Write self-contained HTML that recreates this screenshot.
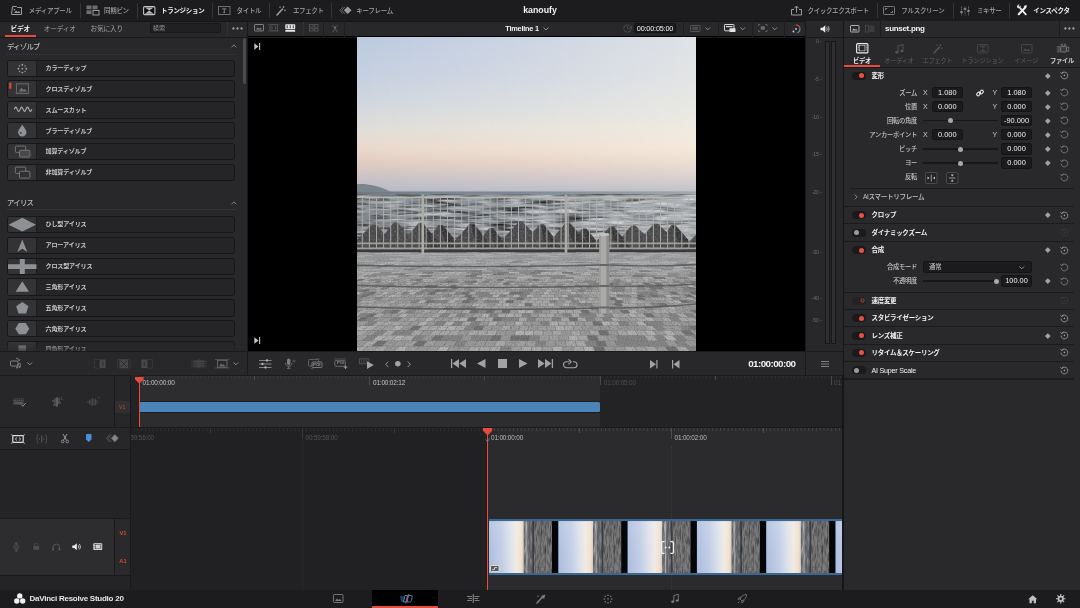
<!DOCTYPE html>
<html lang="ja"><head><meta charset="utf-8"><title>DaVinci Resolve - kanoufy</title>
<style>
*{box-sizing:border-box;margin:0;padding:0}
html,body{width:1080px;height:608px;overflow:hidden;background:#28282a}
body{position:relative;font-family:"Liberation Sans","Noto Sans CJK JP",sans-serif;color:#a4a4a6;font-size:6.6px;line-height:10px;-webkit-font-smoothing:antialiased}
#app{position:absolute;left:0;top:0;width:1080px;height:608px;overflow:hidden;will-change:transform}
.a{position:absolute}
.t{position:absolute;white-space:nowrap;line-height:10px;height:10px}
.r{text-align:right}
.w{color:#f2f2f2}
.b{font-weight:bold}
.m{font-weight:500}
.sep{position:absolute;width:0;border-left:1px dotted #3a3a3c}
.vs{position:absolute;width:1px;background:#19191b}
.hs{position:absolute;height:1px;background:#19191b}
svg{position:absolute;overflow:visible}
.item{position:absolute;left:7px;width:227.5px;height:17.4px;background:#252527;border:1px solid #171719;border-radius:2.5px;overflow:hidden}
.item i{position:absolute;left:0;top:0;width:28.5px;height:100%;background:#333335;border-right:1px solid #1c1c1e}
.item span{position:absolute;left:37.5px;top:2.6px;line-height:10px;color:#c8c8ca;font-weight:bold;font-size:6.1px;letter-spacing:-.2px;white-space:nowrap}
.fld{position:absolute;height:11.4px;background:#1b1b1d;border:1px solid #141416;border-radius:2px;color:#ededed;font-size:7.4px;line-height:9.6px;text-align:center}
.sl{position:absolute;height:1.2px;background:#171719}
.kn{position:absolute;width:5px;height:5px;border-radius:50%;background:#a8a8aa}
.tg{position:absolute;width:13.5px;height:8px;border-radius:4px;background:#1a1a1c}
.tg b{position:absolute;top:1.5px;width:5px;height:5px;border-radius:50%}
.tg.on b{right:1.6px;background:#e8503f}
.tg.off b{left:1.6px;background:#9a9a9c}
.dm{position:absolute;width:3.6px;height:3.6px;background:#a2a2a4;transform:rotate(45deg)}
.il{position:absolute;left:844px;width:229.5px;height:1.3px;background:#1b1b1d}
</style></head>
<body>
<div id="app">
<div class="a" style="left:0px;top:0px;width:1080px;height:20.5px;background:#1c1c1e;"></div>
<div class="a" style="left:0px;top:20.5px;width:1080px;height:0.8px;background:#151517;"></div>
<div class="a" style="left:247.5px;top:37px;width:558px;height:314px;background:#000;"></div>
<div class="a" style="left:0px;top:375px;width:843.5px;height:215px;background:#272729;"></div>
<div class="a" style="left:130.5px;top:375px;width:469.5px;height:52px;background:#2d2d2f;"></div>
<div class="a" style="left:600px;top:375px;width:243.5px;height:52px;background:#232325;"></div>
<div class="a" style="left:0px;top:427px;width:843.5px;height:163px;background:#272729;"></div>
<div class="a" style="left:131px;top:427px;width:356.5px;height:163px;background:#212123;"></div>
<div class="a" style="left:487.5px;top:427px;width:356px;height:163px;background:#2b2b2d;"></div>
<div class="a" style="left:0px;top:449.5px;width:130.5px;height:140.5px;background:#242426;"></div>
<div class="a" style="left:0px;top:518.5px;width:113.5px;height:56.5px;background:#2d2d2f;"></div>
<div class="a" style="left:114px;top:518.5px;width:16.5px;height:56.5px;background:#2a2a2c;"></div>
<div class="a" style="left:0px;top:590px;width:1080px;height:18px;background:#1c1c1e;"></div>
<div class="a" style="left:372px;top:590px;width:66.3px;height:18px;background:#000;"></div>
<div class="a" style="left:372px;top:606px;width:66.3px;height:2px;background:#e64b3d;"></div>
<div class="a" style="left:844px;top:21.3px;width:236px;height:568.7px;background:#29292b;"></div>
<div class="a" style="left:805.5px;top:21.3px;width:38px;height:329.7px;background:#28282a;"></div>
<div class="hs" style="left:0;top:36.8px;width:1080px;background:#1a1a1c"></div>
<div class="hs" style="left:0;top:350.6px;width:843.5px;background:#1a1a1c"></div>
<div class="hs" style="left:0;top:374.6px;width:843.5px;background:#1a1a1c"></div>
<div class="hs" style="left:0;top:426.6px;width:843.5px;background:#1a1a1c"></div>
<div class="hs" style="left:0;top:449px;width:130.5px;background:#19191b"></div>
<div class="hs" style="left:0;top:518px;width:130.5px;background:#19191b"></div>
<div class="hs" style="left:0;top:574.8px;width:130.5px;background:#19191b"></div>
<div class="vs" style="left:246.8px;top:21px;height:354px"></div>
<div class="vs" style="left:805.2px;top:21px;height:354px"></div>
<div class="vs" style="left:843px;top:21px;height:569px;width:1.2px;background:#161618"></div>
<div class="vs" style="left:113.5px;top:375px;height:52px"></div>
<div class="vs" style="left:130px;top:375px;height:215px"></div>
<div class="vs" style="left:113.5px;top:518.5px;height:56.5px"></div>
<div class="a" style="left:247.8px;top:36.3px;width:557.4px;height:1px;background:#000;"></div>
<div class="a" style="left:79.5px;top:3px;height:15px;width:1px;background:#363638"></div>
<div class="a" style="left:136.5px;top:3px;height:15px;width:1px;background:#363638"></div>
<div class="a" style="left:211.5px;top:3px;height:15px;width:1px;background:#363638"></div>
<div class="a" style="left:268.5px;top:3px;height:15px;width:1px;background:#363638"></div>
<div class="a" style="left:331.2px;top:3px;height:15px;width:1px;background:#363638"></div>
<div class="a" style="left:877px;top:3px;height:15px;width:1px;background:#363638"></div>
<div class="a" style="left:952.5px;top:3px;height:15px;width:1px;background:#363638"></div>
<div class="a" style="left:1008.7px;top:3px;height:15px;width:1px;background:#363638"></div>
<span class="t m" style="left:28.8px;top:5.9px;font-size:6.5px;color:#a4a4a6;letter-spacing:-.3px">メディアプール</span>
<span class="t m" style="left:104px;top:5.9px;font-size:6.5px;color:#a4a4a6;letter-spacing:-.3px">同期ビン</span>
<span class="t w b" style="left:161px;top:5.9px;font-size:6.5px;letter-spacing:-.3px">トランジション</span>
<span class="t m" style="left:236.5px;top:5.9px;font-size:6.5px;color:#a4a4a6;letter-spacing:-.3px">タイトル</span>
<span class="t m" style="left:293px;top:5.9px;font-size:6.5px;color:#a4a4a6;letter-spacing:-.4px">エフェクト</span>
<span class="t m" style="left:356.3px;top:5.9px;font-size:6.5px;color:#a4a4a6;letter-spacing:-.3px">キーフレーム</span>
<span class="t w b" style="left:500px;width:80px;text-align:center;top:5.2px;font-size:8.8px;">kanoufy</span>
<span class="t m" style="left:807.5px;top:5.9px;font-size:6.5px;color:#a4a4a6;letter-spacing:-.35px">クイックエクスポート</span>
<span class="t m" style="left:901.3px;top:5.9px;font-size:6.5px;color:#a4a4a6;letter-spacing:-.3px">フルスクリーン</span>
<span class="t m" style="left:977px;top:5.9px;font-size:6.5px;color:#a4a4a6;letter-spacing:-.4px">ミキサー</span>
<span class="t w b" style="left:1033.3px;top:5.9px;font-size:6.5px;letter-spacing:-.3px">インスペクタ</span>
<svg style="left:10.3px;top:4.8px;" width="12.5" height="10" viewBox="0 0 12.5 10"><path d="M2.5 1.5h4l1 1h4v7h-10z" fill="none" stroke="#9c9c9e" stroke-width="1"/><path d="M4 8l2-2.5 1.5 1.5 1.5-1 1.5 2z" fill="#9c9c9e"/><circle cx="4.5" cy="4.7" r=".8" fill="#9c9c9e"/></svg>
<svg style="left:86px;top:5px;" width="13.5" height="10.5" viewBox="0 0 13.5 10.5"><rect x=".5" y=".5" width="5" height="3.8" fill="#6e6e70"/><rect x="6.5" y=".5" width="5" height="3.8" fill="#6e6e70"/><rect x=".5" y="5.3" width="5" height="3.8" fill="#6e6e70"/><rect x="7" y="5.5" width="6" height="4.5" fill="#1c1c1e" stroke="#9c9c9e"/></svg>
<svg style="left:143px;top:6px;" width="12.5" height="9.2" viewBox="0 0 12.5 9.2"><rect x=".6" y=".6" width="11.3" height="8" rx="1" fill="#0c0c0c" stroke="#c2c2c2" stroke-width="1.1"/><path d="M1.8 1.5h8.9L6.25 4.6zM1.8 7.7h8.9L6.25 4.6z" fill="#b4b4b4"/></svg>
<svg style="left:218px;top:6px;" width="12.5" height="9" viewBox="0 0 12.5 9"><rect x=".5" y=".5" width="11.5" height="8" fill="none" stroke="#6c6c6e"/><path d="M4.2 2.9h4.1M6.25 2.9v3.8M5.4 6.7h1.7" stroke="#8c8c8e" stroke-width=".9"/></svg>
<svg style="left:275.5px;top:5px;" width="10" height="11" viewBox="0 0 10 11"><path d="M1 10l5.5-6" stroke="#9c9c9e" stroke-width="1.6" stroke-linecap="round"/><path d="M7.5 1v2M6.5 2h2M9 4.5v1.6M8.2 5.3h1.6M4 1.5v1.4M3.3 2.2h1.4" stroke="#9c9c9e" stroke-width=".7"/></svg>
<svg style="left:338.5px;top:6.2px;" width="13" height="8.6" viewBox="0 0 13 8.6"><path d="M4 .8L.8 4.3 4 7.8M6 .8L2.8 4.3 6 7.8" fill="none" stroke="#78787a" stroke-width=".8"/><path d="M8.7 .5l3.8 3.8-3.8 3.8-3.8-3.8z" fill="#9c9c9e"/></svg>
<svg style="left:790.5px;top:5px;" width="11" height="10.5" viewBox="0 0 11 10.5"><path d="M3 4.5h-2.5v5.5h10v-5.5h-2.5" fill="none" stroke="#9c9c9e"/><path d="M5.5 7.5v-6M3.3 3.3l2.2-2.3 2.2 2.3" fill="none" stroke="#9c9c9e"/></svg>
<svg style="left:883.2px;top:6px;" width="12" height="9" viewBox="0 0 12 9"><rect x=".5" y=".5" width="11" height="8" rx=".8" fill="none" stroke="#78787a"/><path d="M2.5 4v-1.5h1.8M9.5 5v1.5h-1.8" fill="none" stroke="#9c9c9e" stroke-width=".8"/></svg>
<svg style="left:960px;top:5.5px;" width="10" height="10" viewBox="0 0 10 10"><path d="M1.5 .5v9M5 .5v9M8.5 .5v9" stroke="#6e6e70" stroke-width=".9" stroke-dasharray="1.4 .6"/><path d="M.2 6h2.6M3.7 3h2.6M7.2 5h2.6" stroke="#9a9a9c" stroke-width="1.7"/></svg>
<svg style="left:1017px;top:5.3px;" width="10.5" height="10.5" viewBox="0 0 10.5 10.5"><path d="M1.7 9.3L8 2.8" stroke="#f0f0f0" stroke-width="2" stroke-linecap="round"/><path d="M8.8 9.3L3 3" stroke="#f0f0f0" stroke-width="1.8" stroke-linecap="round"/><path d="M.6 2.9a2 2 0 0 0 3-2.3l-1.3 1.2-.9-.9 1.2-1.3a2 2 0 0 0-2 3.3z" fill="#f0f0f0"/><path d="M7.6 .6l2.3-.4-.4 2.3-1.2.9-1.6-1.6z" fill="#f0f0f0"/></svg>
<span class="t w b" style="left:10.6px;top:23.5px;font-size:6.7px;letter-spacing:-.2px">ビデオ</span>
<div class="a" style="left:5px;top:35.4px;width:31px;height:1.6px;background:#e64b3d;"></div>
<span class="t " style="left:43.7px;top:23.5px;font-size:6.7px;color:#a4a4a6;letter-spacing:-.2px">オーディオ</span>
<span class="t " style="left:90.6px;top:23.5px;font-size:6.7px;color:#a4a4a6;letter-spacing:-.2px">お気に入り</span>
<div class="a" style="left:150.2px;top:23.3px;width:71.3px;height:10px;background:#202022;border:1px solid #18181a;border-radius:1.5px"></div>
<span class="t " style="left:152.8px;top:23.4px;font-size:6.2px;color:#8c8c8e;">検索</span>
<div class="sep" style="left:226.8px;top:22px;height:14px"></div>
<svg style="left:232px;top:27px;" width="11" height="3" viewBox="0 0 11 3"><circle cx="1.4" cy="1.5" r="1.15" fill="#a0a0a2"/><circle cx="5.5" cy="1.5" r="1.15" fill="#a0a0a2"/><circle cx="9.6" cy="1.5" r="1.15" fill="#a0a0a2"/></svg>
<svg style="left:253.5px;top:24.3px;" width="10" height="7.5" viewBox="0 0 10 7.5"><rect x=".5" y=".5" width="9" height="6.5" rx=".6" fill="none" stroke="#8a8a8c" stroke-width=".9"/><path d="M2 5.5l1.8-2 1.5 1.2 1.2-.8 1.5 1.6z" fill="#8a8a8c"/></svg>
<svg style="left:268px;top:24.3px;" width="11.5" height="7.5" viewBox="0 0 11.5 7.5"><rect x="2" y=".8" width="7.5" height="6" fill="none" stroke="#58585a" stroke-width=".9"/><path d="M0 .5h11.5M0 7h11.5" stroke="#58585a" stroke-width=".7" stroke-dasharray="1 .8"/><path d="M4 2.5v2.8M7.5 2.5v2.8" stroke="#58585a"/></svg>
<svg style="left:285px;top:24px;" width="10.5" height="8" viewBox="0 0 10.5 8"><rect x=".3" y=".3" width="9.9" height="5" rx=".7" fill="#e8e8e8"/><rect x=".3" y="6" width="9.9" height="1.8" rx=".5" fill="#e8e8e8"/><path d="M2.2 1.3v3M5.25 1.3v3M8.3 1.3v3" stroke="#28282a" stroke-width=".9"/></svg>
<div class="sep" style="left:303px;top:22px;height:14px"></div>
<svg style="left:309px;top:24.3px;" width="9.5" height="7.5" viewBox="0 0 9.5 7.5"><rect x=".4" y=".4" width="3.7" height="2.7" fill="none" stroke="#58585a" stroke-width=".8"/><rect x="5.3" y=".4" width="3.7" height="2.7" fill="none" stroke="#58585a" stroke-width=".8"/><rect x=".4" y="4.3" width="3.7" height="2.7" fill="none" stroke="#58585a" stroke-width=".8"/><rect x="5.3" y="4.3" width="3.7" height="2.7" fill="none" stroke="#58585a" stroke-width=".8"/></svg>
<div class="vs" style="left:323.3px;top:21px;height:16px;background:#1e1e20"></div>
<svg style="left:331.5px;top:24.5px;" width="6" height="7.5" viewBox="0 0 6 7.5"><circle cx="3" cy="2.6" r="1.3" fill="#6a6a6c"/><path d="M.8 7.3c.3-2 1.2-2.6 2.2-2.6s1.9.6 2.2 2.6" fill="none" stroke="#6a6a6c" stroke-width=".8"/><path d="M.5 1.5v-1h1M5.5 1.5v-1h-1" fill="none" stroke="#6a6a6c" stroke-width=".6"/></svg>
<div class="vs" style="left:344px;top:21px;height:16px;background:#1e1e20"></div>
<span class="t w b" style="left:505.3px;top:23.5px;font-size:7.4px;letter-spacing:-.25px">Timeline 1</span>
<svg style="left:542.5px;top:26.8px;" width="6" height="3.5" viewBox="0 0 6 3.5"><path d="M.5 .5l2.5 2.5 2.5-2.5" fill="none" stroke="#9a9a9c" stroke-width=".9"/></svg>
<svg style="left:622.5px;top:23.8px;" width="9" height="9" viewBox="0 0 9 9"><circle cx="4.5" cy="4.5" r="3.8" fill="none" stroke="#4c4c4e" stroke-width=".9"/><path d="M4.5 2v2.7h2.5" fill="none" stroke="#4c4c4e" stroke-width=".9"/><path d="M6 3.5l3-1v2z" fill="#4c4c4e"/></svg>
<div class="a" style="left:633.8px;top:23.3px;width:42.5px;height:10px;background:#19191b;border-radius:1.5px;border:1px solid #141416"></div>
<span class="t w" style="left:615px;width:80px;text-align:center;top:23.5px;font-size:7.3px;letter-spacing:-.2px">00:00:05:00</span>
<div class="vs" style="left:682.5px;top:21px;height:16px;background:#1e1e20"></div>
<div class="vs" style="left:718px;top:21px;height:16px;background:#1e1e20"></div>
<div class="vs" style="left:752px;top:21px;height:16px;background:#1e1e20"></div>
<div class="vs" style="left:783.7px;top:21px;height:16px;background:#1e1e20"></div>
<svg style="left:690px;top:24.8px;" width="10.5" height="7" viewBox="0 0 10.5 7"><rect x=".5" y=".5" width="9.5" height="6" rx=".6" fill="none" stroke="#58585a" stroke-width=".9"/><rect x="2.2" y="1.8" width="6" height="3.4" fill="#4a4a4c"/></svg>
<svg style="left:705.3px;top:27px;" width="5.5" height="3.5" viewBox="0 0 5.5 3.5"><path d="M.5 .5l2.25 2.3 2.25-2.3" fill="none" stroke="#9a9a9c" stroke-width=".9"/></svg>
<svg style="left:724px;top:24px;" width="12" height="8.5" viewBox="0 0 12 8.5"><rect x=".5" y=".5" width="9.5" height="6.3" rx=".6" fill="none" stroke="#d8d8d8" stroke-width="1"/><rect x="2" y="2" width="6.5" height="1.2" fill="#d8d8d8"/><rect x="5.5" y="4.3" width="6" height="3.8" rx=".5" fill="#e4e4e4"/></svg>
<svg style="left:739.5px;top:27px;" width="5.5" height="3.5" viewBox="0 0 5.5 3.5"><path d="M.5 .5l2.25 2.3 2.25-2.3" fill="none" stroke="#9a9a9c" stroke-width=".9"/></svg>
<svg style="left:758px;top:24.3px;" width="9.5" height="8" viewBox="0 0 9.5 8"><path d="M.5 2.2v-1.7h1.7M9 2.2v-1.7h-1.7M.5 5.8v1.7h1.7M9 5.8v1.7h-1.7" fill="none" stroke="#6a6a6c" stroke-width=".8"/><rect x="2.7" y="2.3" width="4.2" height="3.4" fill="#6a6a6c"/></svg>
<svg style="left:772px;top:27px;" width="5.5" height="3.5" viewBox="0 0 5.5 3.5"><path d="M.5 .5l2.25 2.3 2.25-2.3" fill="none" stroke="#9a9a9c" stroke-width=".9"/></svg>
<svg style="left:791px;top:23.5px;" width="10.5" height="10" viewBox="0 0 10.5 10"><circle cx="5" cy="5" r="4" fill="none" stroke="#3a3a3c" stroke-width="1.1"/><path d="M5 1a4 4 0 0 1 4 4" fill="none" stroke="#e8503f" stroke-width="1.2"/><path d="M9 5a4 4 0 0 1-2.5 3.7" fill="none" stroke="#4a90d9" stroke-width="1.2"/><circle cx="5" cy="5" r=".9" fill="#d0d0d0"/><circle cx="2.5" cy="7.5" r=".9" fill="#d0d0d0"/></svg>
<svg style="left:819.5px;top:24.8px;" width="10" height="8" viewBox="0 0 10 8"><path d="M.5 2.7h2l2.8-2.4v7.4l-2.8-2.4h-2z" fill="#ececec"/><path d="M6.6 2.3c.8.9.8 2.5 0 3.4M7.9 1.2c1.5 1.6 1.5 4 0 5.6" fill="none" stroke="#ececec" stroke-width=".8"/></svg>
<svg style="left:849.5px;top:24.5px;" width="9.5" height="7.5" viewBox="0 0 9.5 7.5"><rect x=".5" y=".5" width="8.5" height="6.5" rx=".6" fill="none" stroke="#bdbdbf" stroke-width=".9"/><path d="M2 5.5l1.7-2 1.4 1.2 1.1-.8 1.4 1.6z" fill="#bdbdbf"/></svg>
<svg style="left:865px;top:24.5px;" width="10" height="7.5" viewBox="0 0 10 7.5"><rect x=".5" y=".5" width="3" height="6.5" fill="none" stroke="#4a4a4c" stroke-width=".8"/><rect x="4.5" y=".5" width="5" height="6.5" fill="#3c3c3e"/></svg>
<div class="vs" style="left:880.3px;top:21px;height:16px;background:#1c1c1e"></div>
<div class="vs" style="left:1059.3px;top:21px;height:16px;background:#1c1c1e"></div>
<span class="t w b" style="left:885px;top:24px;font-size:8px;letter-spacing:-.3px">sunset.png</span>
<svg style="left:1064.3px;top:27px;" width="11" height="3" viewBox="0 0 11 3"><circle cx="1.4" cy="1.5" r="1.15" fill="#a6a6a8"/><circle cx="5.4" cy="1.5" r="1.15" fill="#a6a6a8"/><circle cx="9.4" cy="1.5" r="1.15" fill="#a6a6a8"/></svg>
<span class="t m" style="left:7px;top:41.6px;font-size:7.4px;color:#bababc;letter-spacing:-.75px">ディゾルブ</span>
<svg style="left:230.5px;top:44.4px;" width="6" height="4" viewBox="0 0 6 4"><path d="M.5 3.3l2.4-2.5 2.4 2.5" fill="none" stroke="#8a8a8c" stroke-width=".9"/></svg>
<div class="a" style="left:7px;top:53.6px;width:229px;height:0;border-top:1px dotted #3c3c3e"></div>
<span class="t m" style="left:7px;top:197.8px;font-size:7.4px;color:#bababc;letter-spacing:-.75px">アイリス</span>
<svg style="left:230.5px;top:200.60000000000002px;" width="6" height="4" viewBox="0 0 6 4"><path d="M.5 3.3l2.4-2.5 2.4 2.5" fill="none" stroke="#8a8a8c" stroke-width=".9"/></svg>
<div class="a" style="left:7px;top:209.4px;width:229px;height:0;border-top:1px solid #353537"></div>
<div class="item" style="top:59.5px"><i></i><span>カラーディップ</span><svg style="left:0;top:0" width="28.5" height="15.4" viewBox="0 0 28.5 15.4"><circle cx="18.2" cy="7.7" r="0.95" fill="#9a9aa0"/><circle cx="17.06" cy="10.46" r="0.7" fill="#9a9aa0"/><circle cx="14.3" cy="11.6" r="0.95" fill="#9a9aa0"/><circle cx="11.54" cy="10.46" r="0.7" fill="#9a9aa0"/><circle cx="10.4" cy="7.7" r="0.95" fill="#9a9aa0"/><circle cx="11.54" cy="4.94" r="0.7" fill="#9a9aa0"/><circle cx="14.3" cy="3.8" r="0.95" fill="#9a9aa0"/><circle cx="17.06" cy="4.94" r="0.7" fill="#9a9aa0"/><circle cx="14.3" cy="7.7" r=".9" fill="#9a9aa0"/></svg></div>
<div class="item" style="top:80.35px"><i></i><span>クロスディゾルブ</span><svg style="left:0;top:0" width="28.5" height="15.4" viewBox="0 0 28.5 15.4"><rect x="8.5" y="2.8" width="12" height="9.6" fill="none" stroke="#707072" stroke-width=".9"/><path d="M6.5 3.8h16M6.5 11.5h16" stroke="#4e4e50" stroke-width=".5"/><path d="M10.5 10.5l3-3.8 2.2 2.3 1.2-1.1 2 2.6z" fill="#707072"/><rect x="1.3" y="1.8" width="2" height="6" rx=".5" fill="#f0452f"/></svg></div>
<div class="item" style="top:101.2px"><i></i><span>スムースカット</span><svg style="left:0;top:0" width="28.5" height="15.4" viewBox="0 0 28.5 15.4"><path d="M6.3 7.3L6.8 6.2L7.3 5.5L7.8 5.2L8.3 5.5L8.7 6.2L9.2 7.3L9.7 8.3L10.2 9.1L10.7 9.4L11.2 9.1L11.7 8.3L12.2 7.3L12.7 6.3L13.1 5.5L13.6 5.2L14.1 5.5L14.6 6.2L15.1 7.3L15.6 8.3L16.1 9.1L16.6 9.4L17.1 9.1L17.5 8.3L18 7.3L18.5 6.3L19 5.5L19.5 5.2L20 5.5L20.5 6.2L21 7.3L21.5 8.3L21.9 9.1L22.4 9.4L22.9 9.1L23.4 8.3L23.9 7.3" fill="none" stroke="#b0b0b4" stroke-width="1.1"/></svg></div>
<div class="item" style="top:122.05px"><i></i><span>ブラーディゾルブ</span><svg style="left:0;top:0" width="28.5" height="15.4" viewBox="0 0 28.5 15.4"><path d="M14.3 1.8c1.8 3 4.2 5 4.2 7.5a4.2 4.2 0 0 1-8.4 0c0-2.5 2.4-4.5 4.2-7.5z" fill="#8e9297"/><circle cx="12.8" cy="9.9" r=".9" fill="#38383a"/></svg></div>
<div class="item" style="top:142.9px"><i></i><span>加算ディゾルブ</span><svg style="left:0;top:0" width="28.5" height="15.4" viewBox="0 0 28.5 15.4"><rect x="7.4" y="2.1" width="10.3" height="6.3" rx=".9" fill="#303032" stroke="#7c7c7e" stroke-width=".9"/><rect x="11.5" y="6.3" width="10.4" height="6.8" rx=".9" fill="#48484a" stroke="#7c7c7e" stroke-width=".9"/></svg></div>
<div class="item" style="top:163.75px"><i></i><span>非加算ディゾルブ</span><svg style="left:0;top:0" width="28.5" height="15.4" viewBox="0 0 28.5 15.4"><rect x="7.4" y="2.1" width="10.3" height="6.3" rx=".9" fill="#303032" stroke="#7c7c7e" stroke-width=".9"/><rect x="11.5" y="6.3" width="10.4" height="6.8" rx=".9" fill="#303032" stroke="#7c7c7e" stroke-width=".9"/></svg></div>
<div class="a" style="left:0;top:200px;width:243px;height:150.6px;overflow:hidden">
<div class="item" style="top:15.8px"><i></i><span>ひし型アイリス</span><svg style="left:0;top:0" width="28.5" height="15.4" viewBox="0 0 28.5 15.4"><path d="M.5 7.7L14.3 .8 28 7.7 14.3 14.6z" fill="#8d9194"/></svg></div>
<div class="item" style="top:36.65px"><i></i><span>アローアイリス</span><svg style="left:0;top:0" width="28.5" height="15.4" viewBox="0 0 28.5 15.4"><path d="M14.3 1.5L19.3 14 14.3 10.8 9.3 14z" fill="#8d9194"/></svg></div>
<div class="item" style="top:57.5px"><i></i><span>クロス型アイリス</span><svg style="left:0;top:0" width="28.5" height="15.4" viewBox="0 0 28.5 15.4"><path d="M0 5.3h28.5v4.8H0z" fill="#8d9194"/><path d="M11.8 0h5v15.4h-5z" fill="#8d9194"/></svg></div>
<div class="item" style="top:78.35px"><i></i><span>三角形アイリス</span><svg style="left:0;top:0" width="28.5" height="15.4" viewBox="0 0 28.5 15.4"><path d="M14.3 2.3l6.7 10.5H7.6z" fill="#8d9194"/></svg></div>
<div class="item" style="top:99.2px"><i></i><span>五角形アイリス</span><svg style="left:0;top:0" width="28.5" height="15.4" viewBox="0 0 28.5 15.4"><path d="M14.3 1.9l6.1 4.4-2.3 7.1h-7.6L8.2 6.3z" fill="#8d9194"/></svg></div>
<div class="item" style="top:120.05px"><i></i><span>六角形アイリス</span><svg style="left:0;top:0" width="28.5" height="15.4" viewBox="0 0 28.5 15.4"><path d="M10.8 2.1h7l3.5 5.6-3.5 5.6h-7L7.3 7.7z" fill="#8d9194"/></svg></div>
<div class="item" style="top:140.9px"><i></i><span>四角形アイリス</span><svg style="left:0;top:0" width="28.5" height="15.4" viewBox="0 0 28.5 15.4"><path d="M10.5 3.5h7.6v9h-7.6z" fill="#8d9194"/></svg></div>
</div>
<div class="a" style="left:0;top:343px;width:243px;height:7.6px;background:linear-gradient(rgba(40,40,42,0),rgba(40,40,42,.75))"></div>
<div class="a" style="left:243px;top:38.3px;width:3.4px;height:46px;background:#4b4b4d;border-radius:1.7px"></div>
<svg style="left:357px;top:37px;overflow:hidden" width="339" height="314" viewBox="0 0 339 314"><defs>
<linearGradient id="sky" x1="0" y1="0" x2="0" y2="1">
<stop offset="0" stop-color="#bccae1"/><stop offset=".25" stop-color="#c6d0e0"/><stop offset=".45" stop-color="#d3d8de"/><stop offset=".6" stop-color="#e2ded8"/><stop offset=".72" stop-color="#ead9cb"/><stop offset=".82" stop-color="#dfcbc3"/><stop offset=".9" stop-color="#cbc2c6"/><stop offset=".96" stop-color="#bfbdc6"/><stop offset="1" stop-color="#b6b8c2"/>
</linearGradient>
<linearGradient id="skyh" x1="0" y1="0" x2="1" y2="0">
<stop offset="0" stop-color="#fff8ea" stop-opacity="0"/><stop offset=".5" stop-color="#fff8ea" stop-opacity=".24"/><stop offset="1" stop-color="#fff8ea" stop-opacity=".52"/>
</linearGradient>
<linearGradient id="mv" x1="0" y1="0" x2="0" y2="1"><stop offset="0" stop-color="#fff"/><stop offset=".72" stop-color="#eee"/><stop offset=".88" stop-color="#999"/><stop offset="1" stop-color="#444"/></linearGradient><mask id="skm"><rect width="339" height="156" fill="url(#mv)"/></mask>
<linearGradient id="sea" x1="0" y1="0" x2="0" y2="1">
<stop offset="0" stop-color="#78818c"/><stop offset=".12" stop-color="#8b929b"/><stop offset="1" stop-color="#94989c"/>
</linearGradient>
<linearGradient id="gtop" x1="0" y1="0" x2="0" y2="1"><stop offset="0" stop-color="#c4c8cc" stop-opacity=".38"/><stop offset="1" stop-color="#c4c8cc" stop-opacity="0"/></linearGradient>
<linearGradient id="seah" x1="0" y1="0" x2="1" y2="0">
<stop offset="0" stop-color="#000" stop-opacity=".1"/><stop offset=".45" stop-color="#fff" stop-opacity=".02"/><stop offset="1" stop-color="#fff" stop-opacity=".3"/>
</linearGradient>
<filter id="wav" x="0" y="0" width="100%" height="100%"><feTurbulence type="fractalNoise" baseFrequency=".03 .3" numOctaves="3" seed="7"/><feColorMatrix type="matrix" values="0 0 0 0 0  0 0 0 0 0  0 0 0 0 0  2.1 0 0 0 -.92"/></filter>
<filter id="wav2" x="0" y="0" width="100%" height="100%"><feTurbulence type="fractalNoise" baseFrequency=".04 .34" numOctaves="3" seed="23"/><feColorMatrix type="matrix" values="0 0 0 0 1  0 0 0 0 1  0 0 0 0 1  2.3 0 0 0 -1"/></filter>
<filter id="grn" x="0" y="0" width="100%" height="100%"><feTurbulence type="fractalNoise" baseFrequency=".7" numOctaves="2" seed="3"/><feColorMatrix type="matrix" values="0 0 0 0 0  0 0 0 0 0  0 0 0 0 0  .42 0 0 0 -.18"/></filter>
<filter id="tpn" x="0" y="0" width="100%" height="100%"><feTurbulence type="fractalNoise" baseFrequency=".5" numOctaves="2" seed="8"/><feColorMatrix type="matrix" values="0 0 0 0 .5  0 0 0 0 .5  0 0 0 0 .5  .6 0 0 0 -.24"/><feComposite in2="SourceGraphic" operator="in"/></filter>
</defs><rect width="339" height="155.5" fill="url(#sky)"/><rect width="339" height="155.5" fill="url(#skyh)" mask="url(#skm)"/><path d="M0 147.2c5-.5 9-.2 14 .9 6 1.3 12 3.2 17 5.4l3 1.2H0z" fill="#7a858c"/><rect y="154.5" width="339" height="62" fill="url(#sea)"/><rect y="157.5" width="339" height="58" fill="#484e55" filter="url(#wav)"/><rect y="158.5" width="339" height="56" filter="url(#wav2)" opacity=".6"/><rect y="154.5" width="339" height="62" fill="url(#seah)"/><path d="M-12 215L15.3 187.6h4L43.3 215zM13.2 215L36.8 185.5h4L64.7 215zM37.7 215L61.7 185.7h4L90 215zM61.5 215L81.7 188h4L108.5 215zM87.9 215L113 186.6h4L138.9 215zM112.3 215L132.4 191.1h4L153.5 215zM133.8 215L161.5 185.1h4L195.8 215zM157.5 215L182.9 187.3h4L207.9 215zM184.3 215L208.7 185.7h4L238.6 215zM205.3 215L225.3 191.5h4L248.5 215zM230.1 215L253 189.6h4L277 215zM252.3 215L274.4 188.6h4L305.1 215zM272.4 215L296.8 186.8h4L330.7 215zM295 215L314.4 188h4L342 215zM321.7 215L346.4 190.6h4L370.8 215zM344.1 215L368.1 189.5h4L393.3 215zM0 204h339v11H0z" fill="#464648"/><path d="M62.7 186.7l3 0L90 215h-18.3zM82.7 189l3 0L108.5 215h-16.4zM114 187.6l3 0L138.9 215h-17.8zM133.4 192.1l3 0L153.5 215h-14.4zM183.9 188.3l3 0L207.9 215h-17.6zM209.7 186.7l3 0L238.6 215h-19zM226.3 192.5l3 0L248.5 215h-15.1zM254 190.6l3 0L277 215h-16.4zM315.4 189l3 0L342 215h-16.4zM369.1 190.5l3 0L393.3 215h-17.2z" fill="#343436"/><path d="M-12 215L15.3 187.6h4L43.3 215zM13.2 215L36.8 185.5h4L64.7 215zM37.7 215L61.7 185.7h4L90 215zM61.5 215L81.7 188h4L108.5 215zM87.9 215L113 186.6h4L138.9 215zM112.3 215L132.4 191.1h4L153.5 215zM133.8 215L161.5 185.1h4L195.8 215zM157.5 215L182.9 187.3h4L207.9 215zM184.3 215L208.7 185.7h4L238.6 215zM205.3 215L225.3 191.5h4L248.5 215zM230.1 215L253 189.6h4L277 215zM252.3 215L274.4 188.6h4L305.1 215zM272.4 215L296.8 186.8h4L330.7 215zM295 215L314.4 188h4L342 215zM321.7 215L346.4 190.6h4L370.8 215zM344.1 215L368.1 189.5h4L393.3 215z" filter="url(#tpn)"/><rect y="212.8" width="339" height="4" fill="#3a3a3c"/><rect y="215.5" width="339" height="98.5" fill="#838383"/><path d="M-6.5 315.6L1 309.7H10.4L3.4 315.6zM14.9 315.6L21.5 309.7H30.9L24.7 315.6zM110.8 315.6L113.7 309.7H123.1L120.6 315.6zM121.4 315.6L123.9 309.7H133.4L131.3 315.6zM132.1 315.6L134.2 309.7H143.6L142 315.6zM164.1 315.6L164.9 309.7H174.4L173.9 315.6zM174.7 315.6L175.2 309.7H184.6L184.6 315.6zM217.4 315.6L216.1 309.7H225.6L227.2 315.6zM270.7 315.6L267.4 309.7H276.8L280.5 315.6zM292 315.6L287.9 309.7H297.3L301.8 315.6zM324 315.6L318.6 309.7H328L333.8 315.6zM-15.7 309.3L-8.2 303.9H.9L-6.3 309.3zM4.8 309.3L11.5 303.9H20.6L14.2 309.3zM138 309.3L139.7 303.9H148.8L147.4 309.3zM209.7 309.3L208.8 303.9H217.8L219.1 309.3zM219.9 309.3L218.6 303.9H227.7L229.4 309.3zM25 303.5L30.8 298.6H39.5L34.1 303.5zM44.8 303.5L49.8 298.6H58.5L53.8 303.5zM222.3 303.5L221 298.6H229.7L231.3 303.5zM291.3 303.5L287.5 298.6H296.2L300.4 303.5zM-13.2 298.2L-6.3 293.5H2.1L-4.5 298.2zM-3.7 298.2L2.9 293.5H11.2L5 298.2zM24.8 298.2L30.4 293.5H38.8L33.5 298.2zM53.3 298.2L57.9 293.5H66.3L62 298.2zM72.4 298.2L76.3 293.5H84.7L81.1 298.2zM81.9 298.2L85.5 293.5H93.8L90.6 298.2zM91.4 298.2L94.6 293.5H103L100.1 298.2zM110.4 298.2L113 293.5H121.4L119.1 298.2zM119.9 298.2L122.2 293.5H130.5L128.6 298.2zM129.4 298.2L131.3 293.5H139.7L138.1 298.2zM176.9 298.2L177.2 293.5H185.6L185.6 298.2zM196 298.2L195.6 293.5H204L204.7 298.2zM215 298.2L213.9 293.5H222.3L223.7 298.2zM234 298.2L232.3 293.5H240.7L242.7 298.2zM262.5 298.2L259.8 293.5H268.2L271.2 298.2zM281.5 298.2L278.2 293.5H286.6L290.2 298.2zM-12.1 293.1L-5.5 288.9H2.6L-3.7 293.1zM61.3 293.1L65.5 288.9H73.6L69.7 293.1zM70.5 293.1L74.4 288.9H82.4L78.9 293.1zM98 293.1L101 288.9H109L106.4 293.1zM143.9 293.1L145.3 288.9H153.4L152.3 293.1zM208.2 293.1L207.4 288.9H215.5L216.5 293.1zM290.8 293.1L287.2 288.9H295.3L299.1 293.1zM-11 288.5L-4.7 284.5H3.1L-3 288.5zM15.6 288.5L21.1 284.5H28.9L23.6 288.5zM24.4 288.5L29.7 284.5H37.4L32.5 288.5zM33.3 288.5L38.2 284.5H46L41.4 288.5zM104.3 288.5L106.9 284.5H114.7L112.3 288.5zM201.8 288.5L201.3 284.5H209.1L209.9 288.5zM210.7 288.5L209.9 284.5H217.6L218.7 288.5zM255 288.5L252.8 284.5H260.5L263.1 288.5zM-10.1 284.1L-3.9 280.4H3.6L-2.3 284.1zM50 284.1L54.3 280.4H61.8L57.8 284.1zM92.9 284.1L95.8 280.4H103.3L100.7 284.1zM118.6 284.1L120.7 280.4H128.3L126.4 284.1zM127.2 284.1L129.1 280.4H136.6L135 284.1zM161.5 284.1L162.3 280.4H169.8L169.3 284.1zM204.4 284.1L203.8 280.4H211.4L212.2 284.1zM221.6 284.1L220.5 280.4H228L229.4 284.1zM255.9 284.1L253.7 280.4H261.2L263.7 284.1zM281.7 284.1L278.6 280.4H286.2L289.5 284.1zM307.4 284.1L303.6 280.4H311.1L315.2 284.1zM324.6 284.1L320.2 280.4H327.7L332.4 284.1zM333.2 284.1L328.5 280.4H336L340.9 284.1zM15.8 280L21 276.6H28.2L23.3 280zM74 280L77.4 276.6H84.6L81.5 280zM90.6 280L93.5 276.6H100.7L98.1 280zM140.4 280L141.8 276.6H149.1L148 280zM157.1 280L157.9 276.6H165.2L164.6 280zM182 280L182.1 276.6H189.4L189.5 280zM190.3 280L190.2 276.6H197.4L197.8 280zM215.2 280L214.3 276.6H221.6L222.7 280zM240.2 280L238.5 276.6H245.8L247.7 280zM256.8 280L254.6 276.6H261.9L264.3 280zM265.1 280L262.7 276.6H269.9L272.6 280zM281.7 280L278.8 276.6H286L289.2 280zM323.3 280L319.1 276.6H326.3L330.8 280zM339.9 280L335.2 276.6H342.4L347.4 280zM-.2 276.2L5.3 273H12.3L7 276.2zM7.8 276.2L13.1 273H20.1L15.1 276.2zM40.1 276.2L44.4 273H51.4L47.3 276.2zM64.2 276.2L67.8 273H74.8L71.5 276.2zM104.5 276.2L106.9 273H113.9L111.8 276.2zM193.1 276.2L192.9 273H199.9L200.4 276.2zM201.2 276.2L200.7 273H207.7L208.4 276.2zM209.2 276.2L208.5 273H215.6L216.5 276.2zM217.3 276.2L216.4 273H223.4L224.6 276.2zM249.5 276.2L247.6 273H254.7L256.8 276.2zM297.9 276.2L294.5 273H301.6L305.1 276.2zM305.9 276.2L302.4 273H309.4L313.2 276.2zM314 276.2L310.2 273H317.2L321.2 276.2zM.2 272.7L5.6 269.5H12.6L7.5 272.7zM15.9 272.7L20.8 269.5H27.7L23.1 272.7zM78.4 272.7L81.5 269.5H88.5L85.6 272.7zM117.5 272.7L119.5 269.5H126.5L124.7 272.7zM125.3 272.7L127.1 269.5H134.1L132.6 272.7zM133.2 272.7L134.7 269.5H141.6L140.4 272.7zM141 272.7L142.2 269.5H149.2L148.2 272.7zM148.8 272.7L149.8 269.5H156.8L156 272.7zM219.2 272.7L218.2 269.5H225.2L226.4 272.7zM227 272.7L225.8 269.5H232.8L234.2 272.7zM273.9 272.7L271.3 269.5H278.3L281.1 272.7zM281.7 272.7L278.9 269.5H285.9L288.9 272.7zM305.2 272.7L301.7 269.5H308.7L312.4 272.7zM8.4 269.2L13.3 266.3H20.1L15.4 269.2zM16 269.2L20.7 266.3H27.5L23 269.2zM23.6 269.2L28.1 266.3H34.9L30.6 269.2zM38.8 269.2L42.8 266.3H49.6L45.7 269.2zM46.3 269.2L50.2 266.3H57L53.3 269.2zM69.1 269.2L72.4 266.3H79.2L76.1 269.2zM76.7 269.2L79.8 266.3H86.5L83.7 269.2zM91.9 269.2L94.5 266.3H101.3L98.9 269.2zM122.3 269.2L124 266.3H130.8L129.3 269.2zM137.5 269.2L138.8 266.3H145.6L144.5 269.2zM175.4 269.2L175.7 266.3H182.5L182.4 269.2zM183 269.2L183.1 266.3H189.9L190 269.2zM266.5 269.2L264.3 266.3H271.1L273.5 269.2zM274.1 269.2L271.7 266.3H278.4L281.1 269.2zM289.3 269.2L286.4 266.3H293.2L296.3 269.2zM319.7 269.2L315.9 266.3H322.7L326.7 269.2zM327.3 269.2L323.3 266.3H330.1L334.3 269.2zM334.9 269.2L330.7 266.3H337.5L341.9 269.2zM342.5 269.2L338.1 266.3H344.9L349.5 269.2zM1.3 266L6.3 263.3H12.9L8.1 266zM8.7 266L13.5 263.3H20.1L15.5 266zM30.8 266L35 263.3H41.6L37.6 266zM141.5 266L142.7 263.3H149.3L148.3 266zM163.7 266L164.3 263.3H170.8L170.5 266zM171.1 266L171.4 263.3H178L177.8 266zM178.4 266L178.6 263.3H185.2L185.2 266zM185.8 266L185.8 263.3H192.4L192.6 266zM208 266L207.3 263.3H213.9L214.7 266zM230.1 266L228.9 263.3H235.5L236.9 266zM237.5 266L236.1 263.3H242.6L244.3 266zM244.9 266L243.2 263.3H249.8L251.6 266zM281.8 266L279.1 263.3H285.7L288.5 266zM311.3 266L307.9 263.3H314.4L318.1 266zM340.8 266L336.6 263.3H343.2L347.6 266zM23.3 263L27.6 260.4H34L29.9 263zM102.3 263L104.5 260.4H110.9L108.9 263zM123.8 263L125.5 260.4H131.9L130.4 263zM138.2 263L139.4 260.4H145.8L144.8 263zM174.1 263L174.4 260.4H180.8L180.7 263zM181.3 263L181.4 260.4H187.8L187.9 263zM188.5 263L188.4 260.4H194.8L195 263zM217.2 263L216.3 260.4H222.7L223.8 263zM231.5 263L230.3 260.4H236.7L238.1 263zM274.6 263L272.3 260.4H278.6L281.2 263zM296.2 263L293.2 260.4H299.6L302.7 263zM303.3 263L300.2 260.4H306.6L309.9 263zM310.5 263L307.2 260.4H313.6L317.1 263zM332.1 263L328.2 260.4H334.6L338.6 263zM16.2 260.1L20.6 257.7H26.8L22.6 260.1zM37.2 260.1L41 257.7H47.2L43.6 260.1zM58.2 260.1L61.4 257.7H67.6L64.5 260.1zM184 260.1L184 257.7H190.2L190.4 260.1zM191 260.1L190.8 257.7H197L197.4 260.1zM239.9 260.1L238.5 257.7H244.7L246.3 260.1zM253.9 260.1L252.1 257.7H258.3L260.3 260.1zM316.8 260.1L313.4 257.7H319.6L323.2 260.1zM337.8 260.1L333.8 257.7H340L344.1 260.1zM-4.1 257.4L.6 255.1H6.7L2.1 257.4zM36.7 257.4L40.4 255.1H46.5L42.9 257.4zM77.6 257.4L80.3 255.1H86.3L83.8 257.4zM91.2 257.4L93.6 255.1H99.6L97.4 257.4zM111.6 257.4L113.5 255.1H119.5L117.8 257.4zM132 257.4L133.4 255.1H139.4L138.3 257.4zM138.9 257.4L140 255.1H146.1L145.1 257.4zM227.4 257.4L226.3 255.1H232.4L233.6 257.4zM234.2 257.4L233 255.1H239L240.4 257.4zM241 257.4L239.6 255.1H245.6L247.2 257.4zM261.4 257.4L259.5 255.1H265.6L267.6 257.4zM268.2 257.4L266.2 255.1H272.2L274.5 257.4zM302.3 257.4L299.4 255.1H305.4L308.5 257.4zM-10.2 254.8L-5.4 252.6H.5L-4.2 254.8zM16.3 254.8L20.5 252.6H26.4L22.4 254.8zM23 254.8L27 252.6H32.8L29 254.8zM29.6 254.8L33.4 252.6H39.3L35.7 254.8zM36.3 254.8L39.9 252.6H45.8L42.3 254.8zM42.9 254.8L46.4 252.6H52.3L48.9 254.8zM56.2 254.8L59.3 252.6H65.2L62.2 254.8zM122.6 254.8L124.1 252.6H130L128.6 254.8zM129.2 254.8L130.6 252.6H136.5L135.2 254.8zM135.8 254.8L137.1 252.6H142.9L141.9 254.8zM142.5 254.8L143.5 252.6H149.4L148.5 254.8zM175.7 254.8L175.9 252.6H181.8L181.7 254.8zM202.2 254.8L201.8 252.6H207.7L208.3 254.8zM248.7 254.8L247.1 252.6H253L254.7 254.8zM275.3 254.8L273 252.6H278.9L281.3 254.8zM3.5 252.3L7.8 250.3H13.5L9.3 252.3zM16.4 252.3L20.5 250.3H26.2L22.3 252.3zM29.4 252.3L33.1 250.3H38.8L35.2 252.3zM35.8 252.3L39.4 250.3H45.1L41.7 252.3zM42.3 252.3L45.7 250.3H51.5L48.2 252.3zM81.2 252.3L83.7 250.3H89.4L87 252.3zM100.6 252.3L102.6 250.3H108.3L106.5 252.3zM120 252.3L121.6 250.3H127.3L125.9 252.3zM126.5 252.3L127.9 250.3H133.6L132.4 252.3zM152.4 252.3L153.2 250.3H158.9L158.3 252.3zM158.9 252.3L159.5 250.3H165.2L164.8 252.3zM184.8 252.3L184.8 250.3H190.5L190.7 252.3zM191.3 252.3L191.1 250.3H196.8L197.1 252.3zM217.2 252.3L216.4 250.3H222.1L223 252.3zM269 252.3L267 250.3H272.7L274.8 252.3zM275.4 252.3L273.3 250.3H279L281.3 252.3zM340.2 252.3L336.5 250.3H342.2L346.1 252.3zM-2.5 250L1.9 248H7.5L3.2 250zM10.2 250L14.2 248H19.8L15.9 250zM35.4 250L38.9 248H44.5L41.2 250zM41.8 250L45.1 248H50.7L47.5 250zM54.4 250L57.5 248H63L60.1 250zM79.7 250L82.2 248H87.7L85.4 250zM86 250L88.3 248H93.9L91.7 250zM111.3 250L113 248H118.6L117 250zM117.6 250L119.2 248H124.8L123.3 250zM136.6 250L137.7 248H143.3L142.3 250zM142.9 250L143.9 248H149.5L148.6 250zM155.5 250L156.2 248H161.8L161.3 250zM180.8 250L180.9 248H186.5L186.5 250zM206.1 250L205.6 248H211.2L211.8 250zM212.4 250L211.8 248H217.4L218.1 250zM256.7 250L255 248H260.6L262.4 250zM269.3 250L267.3 248H272.9L275 250zM288.3 250L285.9 248H291.4L294 250zM307.2 250L304.4 248H309.9L312.9 250zM-8.2 247.7L-3.7 245.9H1.7L-2.6 247.7zM10.4 247.7L14.4 245.9H19.8L15.9 247.7zM84.4 247.7L86.7 245.9H92.2L90 247.7zM96.8 247.7L98.8 245.9H104.2L102.4 247.7zM152.3 247.7L153.1 245.9H158.5L157.9 247.7zM177 247.7L177.2 245.9H182.6L182.6 247.7zM189.4 247.7L189.3 245.9H194.7L194.9 247.7zM195.5 247.7L195.3 245.9H200.7L201.1 247.7zM207.9 247.7L207.4 245.9H212.8L213.5 247.7zM220.2 247.7L219.4 245.9H224.9L225.8 247.7zM226.4 247.7L225.5 245.9H230.9L232 247.7zM244.9 247.7L243.6 245.9H249L250.5 247.7zM275.8 247.7L273.7 245.9H279.2L281.4 247.7zM282 247.7L279.8 245.9H285.2L287.5 247.7zM306.7 247.7L303.9 245.9H309.3L312.2 247.7zM312.8 247.7L309.9 245.9H315.3L318.4 247.7zM319 247.7L315.9 245.9H321.4L324.6 247.7zM337.5 247.7L334 245.9H339.5L343.1 247.7zM-1.5 245.6L2.7 243.8H8L3.9 245.6zM10.6 245.6L14.5 243.8H19.8L16 245.6zM34.7 245.6L38 243.8H43.3L40.1 245.6zM46.7 245.6L49.8 243.8H55.1L52.2 245.6zM52.8 245.6L55.7 243.8H61L58.2 245.6zM64.8 245.6L67.5 243.8H72.8L70.3 245.6zM70.9 245.6L73.4 243.8H78.7L76.3 245.6zM101 245.6L102.9 243.8H108.2L106.5 245.6zM119.1 245.6L120.6 243.8H125.9L124.6 245.6zM131.2 245.6L132.4 243.8H137.7L136.6 245.6zM143.3 245.6L144.2 243.8H149.5L148.7 245.6zM173.4 245.6L173.7 243.8H179L178.8 245.6zM179.4 245.6L179.6 243.8H184.9L184.9 245.6zM185.5 245.6L185.5 243.8H190.8L190.9 245.6zM197.5 245.6L197.3 243.8H202.6L203 245.6zM203.6 245.6L203.2 243.8H208.5L209 245.6zM215.6 245.6L215 243.8H220.3L221.1 245.6zM239.8 245.6L238.6 243.8H243.8L245.2 245.6zM245.8 245.6L244.4 243.8H249.7L251.2 245.6zM282 245.6L279.8 243.8H285.1L287.4 245.6zM288 245.6L285.7 243.8H291L293.5 245.6zM4.7 243.7L8.6 241.9H14.1L10.3 243.7zM28.3 243.7L31.7 241.9H37.2L33.9 243.7zM46 243.7L49 241.9H54.5L51.6 243.7zM69.6 243.7L72.1 241.9H77.6L75.2 243.7zM99.1 243.7L100.9 241.9H106.4L104.6 243.7zM116.7 243.7L118.2 241.9H123.7L122.3 243.7zM122.6 243.7L124 241.9H129.5L128.2 243.7zM146.2 243.7L147.1 241.9H152.5L151.8 243.7zM158 243.7L158.6 241.9H164.1L163.6 243.7zM187.5 243.7L187.5 241.9H192.9L193.1 243.7zM199.3 243.7L199 241.9H204.5L204.9 243.7zM205.2 243.7L204.8 241.9H210.2L210.8 243.7zM222.9 243.7L222.1 241.9H227.5L228.5 243.7zM252.4 243.7L250.9 241.9H256.4L258 243.7zM264.2 243.7L262.4 241.9H267.9L269.8 243.7zM276 243.7L274 241.9H279.4L281.6 243.7zM299.6 243.7L297.1 241.9H302.5L305.2 243.7zM323.1 243.7L320.1 241.9H325.6L328.7 243.7zM9.4 241.7L13.2 240H24.2L20.7 241.7zM21 241.7L24.5 240H35.5L32.2 241.7zM124.8 241.7L126.1 240H137.1L136.1 241.7zM171 241.7L171.3 240H182.3L182.2 241.7zM182.5 241.7L182.6 240H193.5L193.7 241.7zM217.1 241.7L216.4 240H227.4L228.3 241.7zM240.2 241.7L239 240H250L251.4 241.7zM251.7 241.7L250.3 240H261.3L263 241.7zM263.3 241.7L261.6 240H272.6L274.5 241.7zM309.4 241.7L306.7 240H317.7L320.6 241.7zM332.5 241.7L329.3 240H340.3L343.7 241.7zM-5.2 239.9L-1.2 238.2H9.5L5.8 239.9zM119 239.9L120.4 238.2H131.1L130 239.9zM164.2 239.9L164.6 238.2H175.3L175.1 239.9zM209.3 239.9L208.8 238.2H219.6L220.3 239.9zM2.9 238.1L6.6 236.5H17.1L13.6 238.1zM47.1 238.1L49.9 236.5H60.4L57.8 238.1zM80.3 238.1L82.4 236.5H92.9L91 238.1zM91.3 238.1L93.2 236.5H103.8L102.1 238.1zM124.5 238.1L125.7 236.5H136.2L135.2 238.1zM179.7 238.1L179.8 236.5H190.4L190.5 238.1zM190.8 238.1L190.7 236.5H201.2L201.5 238.1zM201.8 238.1L201.5 236.5H212L212.6 238.1zM-11 236.4L-7.1 234.9H3.2L-.5 236.4zM-.2 236.4L3.5 234.9H13.8L10.3 236.4zM10.6 236.4L14.1 234.9H24.4L21.1 236.4zM32.3 236.4L35.3 234.9H45.7L42.8 236.4zM97.2 236.4L99 234.9H109.3L107.8 236.4zM194.7 236.4L194.5 234.9H204.8L205.2 236.4zM227.2 236.4L226.3 234.9H236.6L237.7 236.4zM238 236.4L236.9 234.9H247.2L248.5 236.4zM259.6 236.4L258.1 234.9H268.5L270.2 236.4zM281.3 236.4L279.4 234.9H289.7L291.8 236.4zM292.1 236.4L290 234.9H300.3L302.6 236.4zM302.9 236.4L300.6 234.9H310.9L313.5 236.4zM-3.2 234.7L.5 233.3H10.6L7.1 234.7zM39.3 234.7L42.1 233.3H52.2L49.6 234.7zM209 234.7L208.6 233.3H218.7L219.3 234.7zM230.2 234.7L229.4 233.3H239.5L240.5 234.7zM262.1 234.7L260.6 233.3H270.7L272.4 234.7zM304.5 234.7L302.2 233.3H312.3L314.8 234.7zM336.3 234.7L333.4 233.3H343.5L346.6 234.7zM4.4 233.1L7.9 231.8H17.8L14.5 233.1zM14.8 233.1L18.1 231.8H28L24.9 233.1zM77.2 233.1L79.3 231.8H89.2L87.3 233.1zM87.6 233.1L89.5 231.8H99.4L97.7 233.1zM98 233.1L99.7 231.8H109.6L108.1 233.1zM108.4 233.1L109.9 231.8H119.8L118.5 233.1zM202 233.1L201.7 231.8H211.6L212.1 233.1zM243.6 233.1L242.5 231.8H252.4L253.7 233.1zM274.8 233.1L273.1 231.8H283L284.9 233.1zM295.6 233.1L293.5 231.8H303.4L305.7 233.1zM326.8 233.1L324.1 231.8H334L336.9 233.1zM21.9 231.6L25 230.3H34.7L31.8 231.6zM42.3 231.6L45 230.3H54.7L52.2 231.6zM83.1 231.6L85 230.3H94.7L93 231.6zM123.9 231.6L125 230.3H134.7L133.8 231.6zM134.1 231.6L135 230.3H144.7L144 231.6zM154.4 231.6L155 230.3H164.7L164.3 231.6zM174.8 231.6L175 230.3H184.7L184.7 231.6zM195.2 231.6L195.1 230.3H204.8L205.1 231.6zM236 231.6L235.1 230.3H244.8L245.9 231.6zM266.6 231.6L265.1 230.3H274.8L276.5 231.6zM287 231.6L285.1 230.3H294.8L296.9 231.6zM317.6 231.6L315.1 230.3H324.8L327.5 231.6zM-11.4 230.2L-7.7 228.9H1.8L-1.7 230.2zM8.6 230.2L11.9 228.9H21.4L18.3 230.2zM128.7 230.2L129.8 228.9H139.3L138.4 230.2zM198.8 230.2L198.5 228.9H208L208.5 230.2zM228.8 230.2L228 228.9H237.5L238.5 230.2zM238.8 230.2L237.8 228.9H247.3L248.5 230.2zM268.8 230.2L267.2 228.9H276.8L278.5 230.2zM278.8 230.2L277.1 228.9H286.6L288.5 230.2zM318.8 230.2L316.3 228.9H325.9L328.5 230.2zM338.8 230.2L336 228.9H345.5L348.5 230.2zM35.2 228.7L37.9 227.5H47.3L44.7 228.7zM74.5 228.7L76.5 227.5H85.8L84 228.7zM162.9 228.7L163.3 227.5H172.6L172.4 228.7zM202.1 228.7L201.8 227.5H211.2L211.7 228.7zM212 228.7L211.5 227.5H220.8L221.5 228.7zM251.2 228.7L250 227.5H259.4L260.8 228.7zM310.2 228.7L307.9 227.5H317.2L319.7 228.7zM339.6 228.7L336.8 227.5H346.1L349.1 228.7zM31.9 227.4L34.6 226.2H43.8L41.2 227.4zM51.1 227.4L53.5 226.2H62.7L60.5 227.4zM70.4 227.4L72.5 226.2H81.7L79.8 227.4zM89.7 227.4L91.4 226.2H100.6L99 227.4zM99.3 227.4L100.9 226.2H110.1L108.7 227.4zM128.3 227.4L129.3 226.2H138.5L137.6 227.4zM147.6 227.4L148.2 226.2H157.4L156.9 227.4zM157.2 227.4L157.7 226.2H166.9L166.5 227.4zM166.8 227.4L167.2 226.2H176.3L176.2 227.4zM195.8 227.4L195.6 226.2H204.7L205.1 227.4zM205.4 227.4L205 226.2H214.2L214.7 227.4zM215 227.4L214.5 226.2H223.7L224.4 227.4zM272.9 227.4L271.3 226.2H280.5L282.2 227.4zM282.5 227.4L280.8 226.2H289.9L291.9 227.4zM292.2 227.4L290.2 226.2H299.4L301.5 227.4zM301.8 227.4L299.7 226.2H308.9L311.1 227.4zM311.4 227.4L309.2 226.2H318.3L320.8 227.4zM340.4 227.4L337.6 226.2H346.7L349.7 227.4zM66.5 226.1L68.6 225H77.6L75.7 226.1zM76 226.1L77.9 225H86.9L85.2 226.1zM94.9 226.1L96.5 225H105.5L104.1 226.1zM104.4 226.1L105.8 225H114.8L113.6 226.1zM113.9 226.1L115.1 225H124.1L123 226.1zM246.4 226.1L245.3 225H254.3L255.6 226.1zM255.9 226.1L254.6 225H263.6L265 226.1zM274.8 226.1L273.2 225H282.2L284 226.1zM284.3 226.1L282.5 225H291.5L293.4 226.1zM303.2 226.1L301.1 225H310.1L312.4 226.1zM312.7 226.1L310.4 225H319.4L321.8 226.1zM-2.4 224.8L.9 223.7H9.7L6.6 224.8zM72 224.8L74 223.7H82.8L81.1 224.8zM81.4 224.8L83.1 223.7H92L90.4 224.8zM109.3 224.8L110.6 223.7H119.4L118.3 224.8zM211.6 224.8L211.1 223.7H219.9L220.6 224.8zM248.8 224.8L247.7 223.7H256.5L257.8 224.8zM276.7 224.8L275.1 223.7H283.9L285.7 224.8zM286 224.8L284.2 223.7H293.1L295 224.8zM304.6 224.8L302.5 223.7H311.3L313.6 224.8zM332.5 224.8L329.9 223.7H338.8L341.5 224.8zM341.8 224.8L339.1 223.7H347.9L350.8 224.8zM37.2 223.6L39.7 222.6H52.9L50.6 223.6zM50.9 223.6L53.2 222.6H66.4L64.3 223.6zM105.8 223.6L107.1 222.6H120.3L119.2 223.6zM146.9 223.6L147.5 222.6H160.7L160.3 223.6zM256.6 223.6L255.4 222.6H268.5L270 223.6zM31.2 222.4L33.8 221.4H46.8L44.4 222.4zM71.7 222.4L73.6 221.4H86.5L84.9 222.4zM98.6 222.4L100.1 221.4H113L111.8 222.4zM273.8 222.4L272.3 221.4H285.3L287 222.4zM52 221.3L54.2 220.3H66.9L64.9 221.3zM277.2 221.3L275.7 220.3H288.5L290.2 221.3zM330.3 221.3L327.9 220.3H340.6L343.2 221.3zM-6.2 220.2L-3.1 219.3H9.4L6.6 220.2zM72 220.2L73.9 219.3H86.4L84.8 220.2zM98.1 220.2L99.5 219.3H112L110.8 220.2zM111.1 220.2L112.3 219.3H124.8L123.9 220.2zM124.2 220.2L125.1 219.3H137.7L136.9 220.2zM189.3 220.2L189.3 219.3H201.8L202.1 220.2zM241.5 220.2L240.5 219.3H253.1L254.2 220.2zM267.5 220.2L266.2 219.3H278.7L280.3 220.2zM280.6 220.2L279 219.3H291.5L293.3 220.2zM306.6 220.2L304.7 219.3H317.2L319.4 220.2zM1.7 219.1L4.6 218.2H16.9L14.2 219.1zM40.1 219.1L42.4 218.2H54.8L52.7 219.1zM53 219.1L55.1 218.2H67.4L65.5 219.1zM117.1 219.1L118.1 218.2H130.5L129.6 219.1zM181.2 219.1L181.2 218.2H193.6L193.7 219.1zM232.5 219.1L231.7 218.2H244L245 219.1zM72.3 218.1L74.1 217.2H86.2L84.7 218.1zM85 218.1L86.5 217.2H98.7L97.3 218.1zM97.6 218.1L99 217.2H111.1L109.9 218.1zM122.8 218.1L123.8 217.2H135.9L135.1 218.1zM160.7 218.1L161.1 217.2H173.2L173 218.1zM198.5 218.1L198.3 217.2H210.4L210.8 218.1zM236.4 218.1L235.6 217.2H247.7L248.7 218.1zM249 218.1L248 217.2H260.1L261.3 218.1zM312.1 218.1L310.1 217.2H322.2L324.4 218.1zM16.6 217.1L19.2 216.3H31.1L28.7 217.1zM29 217.1L31.4 216.3H43.4L41.1 217.1zM41.4 217.1L43.7 216.3H55.6L53.6 217.1zM66.3 217.1L68.1 216.3H80.1L78.4 217.1zM140.8 217.1L141.5 216.3H153.4L152.9 217.1zM289.9 217.1L288.2 216.3H300.2L302 217.1zM302.3 217.1L300.5 216.3H312.4L314.4 217.1zM-12.9 216.1L-9.9 215.5H1.8L-1 216.1zM-.7 216.1L2.1 215.5H13.8L11.2 216.1zM36 216.1L38.2 215.5H50L47.9 216.1zM109.3 216.1L110.5 215.5H122.2L121.3 216.1zM133.8 216.1L134.6 215.5H146.3L145.7 216.1zM146 216.1L146.6 215.5H158.4L157.9 216.1zM231.6 216.1L230.9 215.5H242.7L243.5 216.1zM243.8 216.1L243 215.5H254.7L255.8 216.1zM256.1 216.1L255 215.5H266.7L268 216.1zM268.3 216.1L267 215.5H278.8L280.2 216.1zM329.4 216.1L327.2 215.5H339L341.4 216.1z" fill="#aaaaaa"/><path d="M25.5 315.6L31.7 309.7H41.2L35.4 315.6zM57.5 315.6L62.5 309.7H71.9L67.4 315.6zM89.5 315.6L93.2 309.7H102.6L99.3 315.6zM100.1 315.6L103.4 309.7H112.9L110 315.6zM206.7 315.6L205.9 309.7H215.3L216.6 315.6zM249.4 315.6L246.9 309.7H256.3L259.2 315.6zM260 315.6L257.1 309.7H266.6L269.9 315.6zM302.6 315.6L298.1 309.7H307.5L312.5 315.6zM-5.5 309.3L1.7 303.9H10.7L4 309.3zM25.3 309.3L31.2 303.9H40.3L34.7 309.3zM35.5 309.3L41.1 303.9H50.2L45 309.3zM76.5 309.3L80.6 303.9H89.6L85.9 309.3zM86.7 309.3L90.4 303.9H99.5L96.2 309.3zM107.2 309.3L110.1 303.9H119.2L116.7 309.3zM117.5 309.3L120 303.9H129.1L126.9 309.3zM127.7 309.3L129.9 303.9H138.9L137.2 309.3zM148.2 309.3L149.6 303.9H158.7L157.7 309.3zM189.2 309.3L189 303.9H198.1L198.6 309.3zM199.4 309.3L198.9 303.9H208L208.9 309.3zM250.7 309.3L248.2 303.9H257.3L260.1 309.3zM312.1 309.3L307.4 303.9H316.5L321.6 309.3zM332.6 309.3L327.1 303.9H336.2L342.1 309.3zM342.9 309.3L337 303.9H346.1L352.3 309.3zM-14.4 303.5L-7.2 298.6H1.5L-5.4 303.5zM64.5 303.5L68.8 298.6H77.5L73.5 303.5zM103.9 303.5L106.9 298.6H115.6L113 303.5zM143.4 303.5L144.9 298.6H153.6L152.4 303.5zM202.6 303.5L201.9 298.6H210.7L211.6 303.5zM251.9 303.5L249.5 298.6H258.2L260.9 303.5zM330.8 303.5L325.5 298.6H334.2L339.8 303.5zM5.8 298.2L12 293.5H20.4L14.5 298.2zM62.8 298.2L67.1 293.5H75.5L71.6 298.2zM100.9 298.2L103.8 293.5H112.2L109.6 298.2zM138.9 298.2L140.5 293.5H148.9L147.6 298.2zM148.4 298.2L149.7 293.5H158.1L157.1 298.2zM205.5 298.2L204.8 293.5H213.1L214.2 298.2zM224.5 298.2L223.1 293.5H231.5L233.2 298.2zM253 298.2L250.6 293.5H259L261.7 298.2zM300.5 298.2L296.5 293.5H304.9L309.2 298.2zM338.6 298.2L333.2 293.5H341.6L347.3 298.2zM43 293.1L47.8 288.9H55.8L51.4 293.1zM125.6 293.1L127.6 288.9H135.6L133.9 293.1zM134.7 293.1L136.4 288.9H144.5L143.1 293.1zM153.1 293.1L154.2 288.9H162.3L161.5 293.1zM171.5 293.1L171.9 288.9H180L179.8 293.1zM226.5 293.1L225.1 288.9H233.2L234.9 293.1zM235.7 293.1L234 288.9H242.1L244.1 293.1zM244.9 293.1L242.9 288.9H250.9L253.2 293.1zM263.2 293.1L260.6 288.9H268.7L271.6 293.1zM272.4 293.1L269.5 288.9H277.5L280.8 293.1zM281.6 293.1L278.3 288.9H286.4L290 293.1zM309.1 293.1L304.9 288.9H313L317.5 293.1zM318.3 293.1L313.8 288.9H321.9L326.7 293.1zM51 288.5L55.4 284.5H63.2L59.1 288.5zM68.8 288.5L72.6 284.5H80.3L76.8 288.5zM122 288.5L124.1 284.5H131.8L130.1 288.5zM139.7 288.5L141.2 284.5H149L147.8 288.5zM148.6 288.5L149.8 284.5H157.6L156.7 288.5zM166.3 288.5L167 284.5H174.7L174.4 288.5zM175.2 288.5L175.5 284.5H183.3L183.3 288.5zM219.5 288.5L218.4 284.5H226.2L227.6 288.5zM272.8 288.5L269.9 284.5H277.7L280.8 288.5zM308.2 288.5L304.2 284.5H312L316.3 288.5zM326 288.5L321.4 284.5H329.2L334 288.5zM334.8 288.5L330 284.5H337.8L342.9 288.5zM15.7 284.1L21 280.4H28.5L23.5 284.1zM24.3 284.1L29.3 280.4H36.8L32 284.1zM58.6 284.1L62.6 280.4H70.1L66.4 284.1zM75.7 284.1L79.2 280.4H86.7L83.5 284.1zM84.3 284.1L87.5 280.4H95L92.1 284.1zM264.5 284.1L262 280.4H269.5L272.3 284.1zM298.8 284.1L295.3 280.4H302.8L306.6 284.1zM341.7 284.1L336.8 280.4H344.3L349.5 284.1zM24.1 280L29 276.6H36.3L31.6 280zM32.4 280L37.1 276.6H44.3L39.9 280zM49 280L53.2 276.6H60.4L56.5 280zM65.6 280L69.3 276.6H76.6L73.2 280zM107.2 280L109.6 276.6H116.8L114.7 280zM173.7 280L174 276.6H181.3L181.2 280zM198.6 280L198.2 276.6H205.5L206.1 280zM298.3 280L294.9 276.6H302.1L305.8 280zM306.6 280L302.9 276.6H310.2L314.2 280zM56.2 276.2L60 273H67L63.4 276.2zM72.3 276.2L75.6 273H82.7L79.5 276.2zM88.4 276.2L91.3 273H98.3L95.7 276.2zM96.5 276.2L99.1 273H106.1L103.7 276.2zM136.7 276.2L138.2 273H145.2L144 276.2zM152.9 276.2L153.8 273H160.8L160.1 276.2zM185.1 276.2L185.1 273H192.1L192.3 276.2zM233.4 276.2L232 273H239L240.7 276.2zM257.6 276.2L255.5 273H262.5L264.8 276.2zM281.8 276.2L278.9 273H285.9L289 276.2zM289.8 276.2L286.7 273H293.7L297.1 276.2zM322 276.2L318 273H325L329.3 276.2zM330.1 276.2L325.8 273H332.8L337.4 276.2zM-7.6 272.7L-2 269.5H5L-.4 272.7zM8.1 272.7L13.2 269.5H20.2L15.3 272.7zM31.5 272.7L35.9 269.5H42.9L38.7 272.7zM62.8 272.7L66.3 269.5H73.3L70 272.7zM94.1 272.7L96.7 269.5H103.7L101.3 272.7zM156.6 272.7L157.4 269.5H164.4L163.8 272.7zM172.2 272.7L172.6 269.5H179.6L179.5 272.7zM180.1 272.7L180.2 269.5H187.2L187.3 272.7zM187.9 272.7L187.8 269.5H194.8L195.1 272.7zM195.7 272.7L195.4 269.5H202.4L202.9 272.7zM258.2 272.7L256.1 269.5H263.1L265.5 272.7zM297.3 272.7L294.1 269.5H301.1L304.6 272.7zM328.6 272.7L324.5 269.5H331.5L335.8 272.7zM336.4 272.7L332.1 269.5H339.1L343.6 272.7zM-6.8 269.2L-1.4 266.3H5.3L.2 269.2zM31.2 269.2L35.5 266.3H42.2L38.2 269.2zM53.9 269.2L57.6 266.3H64.4L60.9 269.2zM61.5 269.2L65 266.3H71.8L68.5 269.2zM99.5 269.2L101.9 266.3H108.7L106.5 269.2zM107.1 269.2L109.3 266.3H116.1L114.1 269.2zM129.9 269.2L131.4 266.3H138.2L136.9 269.2zM198.2 269.2L197.8 266.3H204.6L205.2 269.2zM213.4 269.2L212.6 266.3H219.4L220.4 269.2zM243.8 269.2L242.1 266.3H248.9L250.8 269.2zM251.4 269.2L249.5 266.3H256.3L258.4 269.2zM281.7 269.2L279 266.3H285.8L288.7 269.2zM312.1 269.2L308.6 266.3H315.3L319.1 269.2zM16.1 266L20.7 263.3H27.2L22.8 266zM23.4 266L27.8 263.3H34.4L30.2 266zM38.2 266L42.2 263.3H48.8L45 266zM45.6 266L49.4 263.3H56L52.4 266zM97.2 266L99.6 263.3H106.2L104 266zM156.3 266L157.1 263.3H163.7L163.1 266zM200.6 266L200.2 263.3H206.7L207.4 266zM252.2 266L250.4 263.3H257L259 266zM289.1 266L286.3 263.3H292.9L295.9 266zM296.5 266L293.5 263.3H300.1L303.3 266zM303.9 266L300.7 263.3H307.3L310.7 266zM1.8 263L6.6 260.4H13L8.4 263zM30.5 263L34.6 260.4H41L37.1 263zM44.9 263L48.6 260.4H55L51.4 263zM52 263L55.6 260.4H62L58.6 263zM59.2 263L62.6 260.4H68.9L65.8 263zM116.7 263L118.5 260.4H124.9L123.2 263zM152.6 263L153.4 260.4H159.8L159.1 263zM166.9 263L167.4 260.4H173.8L173.5 263zM202.8 263L202.4 260.4H208.7L209.4 263zM224.4 263L223.3 260.4H229.7L230.9 263zM267.4 263L265.3 260.4H271.7L274 263zM289 263L286.2 260.4H292.6L295.6 263zM9.2 260.1L13.8 257.7H20L15.6 260.1zM23.2 260.1L27.4 257.7H33.6L29.6 260.1zM44.2 260.1L47.8 257.7H54L50.6 260.1zM51.2 260.1L54.6 257.7H60.8L57.6 260.1zM65.1 260.1L68.2 257.7H74.4L71.5 260.1zM72.1 260.1L75 257.7H81.3L78.5 260.1zM79.1 260.1L81.9 257.7H88.1L85.5 260.1zM93.1 260.1L95.5 257.7H101.7L99.5 260.1zM149 260.1L150 257.7H156.2L155.4 260.1zM177 260.1L177.2 257.7H183.4L183.4 260.1zM198 260.1L197.6 257.7H203.8L204.3 260.1zM225.9 260.1L224.9 257.7H231.1L232.3 260.1zM323.8 260.1L320.2 257.7H326.4L330.2 260.1zM-11 257.4L-6 255.1H0L-4.7 257.4zM29.9 257.4L33.8 255.1H39.8L36.1 257.4zM63.9 257.4L67 255.1H73L70.2 257.4zM84.4 257.4L86.9 255.1H93L90.6 257.4zM172.9 257.4L173.2 255.1H179.3L179.1 257.4zM179.7 257.4L179.9 255.1H185.9L185.9 257.4zM200.1 257.4L199.8 255.1H205.8L206.4 257.4zM207 257.4L206.4 255.1H212.4L213.2 257.4zM309.1 257.4L306 255.1H312L315.3 257.4zM329.5 257.4L325.9 255.1H331.9L335.7 257.4zM9.7 254.8L14 252.6H19.9L15.7 254.8zM149.1 254.8L150 252.6H155.9L155.2 254.8zM155.8 254.8L156.5 252.6H162.4L161.8 254.8zM182.3 254.8L182.4 252.6H188.3L188.4 254.8zM195.6 254.8L195.3 252.6H201.2L201.6 254.8zM215.5 254.8L214.8 252.6H220.6L221.5 254.8zM228.8 254.8L227.7 252.6H233.6L234.8 254.8zM268.6 254.8L266.6 252.6H272.4L274.7 254.8zM281.9 254.8L279.5 252.6H285.4L287.9 254.8zM288.5 254.8L286 252.6H291.9L294.6 254.8zM308.4 254.8L305.4 252.6H311.3L314.5 254.8zM315.1 254.8L311.9 252.6H317.8L321.1 254.8zM321.7 254.8L318.4 252.6H324.3L327.8 254.8zM-3 252.3L1.5 250.3H7.2L2.9 252.3zM9.9 252.3L14.1 250.3H19.9L15.8 252.3zM48.8 252.3L52.1 250.3H57.8L54.7 252.3zM68.2 252.3L71 250.3H76.7L74.1 252.3zM87.6 252.3L90 250.3H95.7L93.5 252.3zM113.5 252.3L115.3 250.3H121L119.4 252.3zM133 252.3L134.2 250.3H139.9L138.9 252.3zM139.5 252.3L140.5 250.3H146.3L145.3 252.3zM145.9 252.3L146.9 250.3H152.6L151.8 252.3zM171.8 252.3L172.2 250.3H177.9L177.7 252.3zM178.3 252.3L178.5 250.3H184.2L184.2 252.3zM210.7 252.3L210.1 250.3H215.8L216.6 252.3zM223.6 252.3L222.7 250.3H228.4L229.5 252.3zM236.6 252.3L235.4 250.3H241.1L242.5 252.3zM288.4 252.3L285.9 250.3H291.6L294.3 252.3zM314.3 252.3L311.2 250.3H316.9L320.2 252.3zM3.8 250L8.1 248H13.6L9.6 250zM16.5 250L20.4 248H26L22.2 250zM22.8 250L26.6 248H32.2L28.5 250zM48.1 250L51.3 248H56.9L53.8 250zM60.7 250L63.6 248H69.2L66.4 250zM149.2 250L150.1 248H155.6L154.9 250zM168.2 250L168.6 248H174.1L173.9 250zM187.1 250L187.1 248H192.7L192.9 250zM225.1 250L224.1 248H229.7L230.8 250zM231.4 250L230.3 248H235.9L237.1 250zM237.7 250L236.5 248H242L243.4 250zM294.6 250L292 248H297.6L300.3 250zM319.9 250L316.7 248H322.3L325.6 250zM326.2 250L322.9 248H328.5L331.9 250zM-2 247.7L2.3 245.9H7.7L3.6 247.7zM4.2 247.7L8.3 245.9H13.8L9.8 247.7zM16.5 247.7L20.4 245.9H25.8L22.1 247.7zM22.7 247.7L26.4 245.9H31.9L28.3 247.7zM41.2 247.7L44.5 245.9H49.9L46.8 247.7zM78.3 247.7L80.7 245.9H86.1L83.8 247.7zM103 247.7L104.8 245.9H110.3L108.5 247.7zM121.5 247.7L122.9 245.9H128.4L127 247.7zM133.8 247.7L135 245.9H140.4L139.4 247.7zM158.5 247.7L159.1 245.9H164.6L164.1 247.7zM164.7 247.7L165.2 245.9H170.6L170.3 247.7zM183.2 247.7L183.2 245.9H188.7L188.8 247.7zM201.7 247.7L201.3 245.9H206.8L207.3 247.7zM263.4 247.7L261.7 245.9H267.1L269 247.7zM294.3 247.7L291.8 245.9H297.3L299.9 247.7zM76.9 245.6L79.3 243.8H84.6L82.3 245.6zM137.2 245.6L138.3 243.8H143.6L142.7 245.6zM155.3 245.6L156 243.8H161.3L160.8 245.6zM167.4 245.6L167.8 243.8H173.1L172.8 245.6zM209.6 245.6L209.1 243.8H214.4L215 245.6zM221.7 245.6L220.9 243.8H226.2L227.1 245.6zM251.8 245.6L250.3 243.8H255.6L257.3 245.6zM263.9 245.6L262.1 243.8H267.4L269.3 245.6zM294.1 245.6L291.6 243.8H296.9L299.5 245.6zM324.2 245.6L321.1 243.8H326.4L329.6 245.6zM342.3 245.6L338.8 243.8H344.1L347.7 245.6zM-7.1 243.7L-2.9 241.9H2.6L-1.5 243.7zM40.1 243.7L43.3 241.9H48.7L45.7 243.7zM81.4 243.7L83.6 241.9H89.1L87 243.7zM104.9 243.7L106.7 241.9H112.2L110.5 243.7zM110.8 243.7L112.5 241.9H117.9L116.4 243.7zM134.4 243.7L135.5 241.9H141L140 243.7zM152.1 243.7L152.8 241.9H158.3L157.7 243.7zM181.6 243.7L181.7 241.9H187.2L187.2 243.7zM193.4 243.7L193.2 241.9H198.7L199 243.7zM217 243.7L216.3 241.9H221.8L222.6 243.7zM228.8 243.7L227.8 241.9H233.3L234.4 243.7zM246.5 243.7L245.1 241.9H250.6L252.1 243.7zM293.7 243.7L291.3 241.9H296.8L299.3 243.7zM317.2 243.7L314.4 241.9H319.8L322.8 243.7zM329 243.7L325.9 241.9H331.4L334.6 243.7zM340.8 243.7L337.4 241.9H342.9L346.4 243.7zM44.1 241.7L47.1 240H58.1L55.3 241.7zM55.6 241.7L58.4 240H69.4L66.8 241.7zM90.2 241.7L92.2 240H103.2L101.4 241.7zM101.7 241.7L103.5 240H114.5L113 241.7zM136.4 241.7L137.4 240H148.4L147.6 241.7zM274.8 241.7L272.9 240H283.9L286 241.7zM17.4 239.9L20.9 238.2H31.6L28.4 239.9zM51.3 239.9L54.1 238.2H64.8L62.2 239.9zM85.1 239.9L87.2 238.2H98L96.1 239.9zM96.4 239.9L98.3 238.2H109L107.4 239.9zM130.3 239.9L131.4 238.2H142.2L141.3 239.9zM141.6 239.9L142.5 238.2H153.2L152.6 239.9zM231.9 239.9L230.9 238.2H241.7L242.9 239.9zM265.8 239.9L264.1 238.2H274.8L276.7 239.9zM299.6 239.9L297.2 238.2H308L310.6 239.9zM322.2 239.9L319.3 238.2H330.1L333.2 239.9zM-8.2 238.1L-4.2 236.5H6.3L2.6 238.1zM69.2 238.1L71.6 236.5H82.1L80 238.1zM157.6 238.1L158.2 236.5H168.7L168.4 238.1zM246.1 238.1L244.8 236.5H255.3L256.8 238.1zM257.1 238.1L255.6 236.5H266.2L267.9 238.1zM268.2 238.1L266.5 236.5H277L278.9 238.1zM290.3 238.1L288.1 236.5H298.6L301 238.1zM323.4 238.1L320.6 236.5H331.1L334.2 238.1zM43.1 236.4L46 234.9H56.3L53.6 236.4zM53.9 236.4L56.6 234.9H66.9L64.5 236.4zM75.6 236.4L77.8 234.9H88.1L86.1 236.4zM248.8 236.4L247.5 234.9H257.8L259.3 236.4zM270.5 236.4L268.8 234.9H279.1L281 236.4zM313.8 236.4L311.2 234.9H321.5L324.3 236.4zM324.6 236.4L321.8 234.9H332.1L335.1 236.4zM7.4 234.7L10.9 233.3H21L17.8 234.7zM18.1 234.7L21.3 233.3H31.4L28.4 234.7zM28.7 234.7L31.7 233.3H41.8L39 234.7zM49.9 234.7L52.5 233.3H62.6L60.2 234.7zM145.4 234.7L146.1 233.3H156.2L155.7 234.7zM198.4 234.7L198.2 233.3H208.3L208.7 234.7zM219.6 234.7L219 233.3H229.1L229.9 234.7zM293.9 234.7L291.8 233.3H301.9L304.2 234.7zM325.7 234.7L323 233.3H333.1L336 234.7zM-6 233.1L-2.3 231.8H7.6L4.1 233.1zM56.4 233.1L58.9 231.8H68.8L66.5 233.1zM139.6 233.1L140.5 231.8H150.4L149.7 233.1zM160.4 233.1L160.9 231.8H170.8L170.5 233.1zM212.4 233.1L211.9 231.8H221.8L222.5 233.1zM222.8 233.1L222.1 231.8H232L232.9 233.1zM254 233.1L252.7 231.8H262.6L264.1 233.1zM1.5 231.6L4.9 230.3H14.6L11.4 231.6zM32.1 231.6L35 230.3H44.7L42 231.6zM93.3 231.6L95 230.3H104.7L103.2 231.6zM103.5 231.6L105 230.3H114.7L113.4 231.6zM113.7 231.6L115 230.3H124.7L123.6 231.6zM144.3 231.6L145 230.3H154.7L154.1 231.6zM185 231.6L185 230.3H194.8L194.9 231.6zM205.4 231.6L205.1 230.3H214.8L215.3 231.6zM225.8 231.6L225.1 230.3H234.8L235.7 231.6zM246.2 231.6L245.1 230.3H254.8L256.1 231.6zM276.8 231.6L275.1 230.3H284.8L286.7 231.6zM307.4 231.6L305.1 230.3H314.8L317.3 231.6zM338 231.6L335.1 230.3H344.8L347.9 231.6zM-1.4 230.2L2.1 228.9H11.6L8.3 230.2zM28.7 230.2L31.6 228.9H41.1L38.4 230.2zM38.7 230.2L41.4 228.9H50.9L48.4 230.2zM48.7 230.2L51.2 228.9H60.7L58.4 230.2zM78.7 230.2L80.7 228.9H90.2L88.4 230.2zM108.7 230.2L110.1 228.9H119.6L118.4 230.2zM118.7 230.2L119.9 228.9H129.5L128.4 230.2zM138.7 230.2L139.6 228.9H149.1L148.4 230.2zM158.7 230.2L159.2 228.9H168.7L168.4 230.2zM168.7 230.2L169 228.9H178.6L178.4 230.2zM208.8 230.2L208.3 228.9H217.8L218.5 230.2zM298.8 230.2L296.7 228.9H306.2L308.5 230.2zM328.8 230.2L326.2 228.9H335.7L338.5 230.2zM45 228.7L47.6 227.5H56.9L54.5 228.7zM54.8 228.7L57.2 227.5H66.6L64.4 228.7zM94.1 228.7L95.8 227.5H105.1L103.6 228.7zM133.4 228.7L134.3 227.5H143.7L142.9 228.7zM192.3 228.7L192.2 227.5H201.5L201.8 228.7zM221.8 228.7L221.1 227.5H230.5L231.3 228.7zM241.4 228.7L240.4 227.5H249.7L250.9 228.7zM270.9 228.7L269.3 227.5H278.7L280.4 228.7zM290.5 228.7L288.6 227.5H297.9L300 228.7zM300.3 228.7L298.2 227.5H307.6L309.9 228.7zM2.9 227.4L6.2 226.2H15.4L12.3 227.4zM12.6 227.4L15.7 226.2H24.8L21.9 227.4zM60.8 227.4L63 226.2H72.2L70.1 227.4zM137.9 227.4L138.8 226.2H147.9L147.3 227.4zM186.1 227.4L186.1 226.2H195.3L195.5 227.4zM330.7 227.4L328.1 226.2H337.3L340.1 227.4zM38.1 226.1L40.7 225H49.7L47.3 226.1zM57.1 226.1L59.3 225H68.3L66.2 226.1zM85.5 226.1L87.2 225H96.2L94.6 226.1zM123.3 226.1L124.4 225H133.4L132.5 226.1zM142.3 226.1L143 225H152L151.4 226.1zM180.1 226.1L180.2 225H189.2L189.3 226.1zM189.6 226.1L189.5 225H198.5L198.8 226.1zM199.1 226.1L198.8 225H207.8L208.2 226.1zM236.9 226.1L236 225H245L246.1 226.1zM293.7 226.1L291.8 225H300.8L302.9 226.1zM341.1 226.1L338.3 225H347.3L350.3 226.1zM34.8 224.8L37.4 223.7H46.3L43.8 224.8zM90.7 224.8L92.3 223.7H101.1L99.7 224.8zM127.9 224.8L128.8 223.7H137.7L136.9 224.8zM137.2 224.8L138 223.7H146.8L146.2 224.8zM165.1 224.8L165.4 223.7H174.2L174.1 224.8zM202.3 224.8L202 223.7H210.8L211.3 224.8zM220.9 224.8L220.2 223.7H229.1L229.9 224.8zM258.1 224.8L256.8 223.7H265.6L267.1 224.8zM313.9 224.8L311.6 223.7H320.5L322.9 224.8zM323.2 224.8L320.8 223.7H329.6L332.2 224.8zM-3.9 223.6L-.7 222.6H12.5L9.5 223.6zM64.6 223.6L66.7 222.6H79.9L78 223.6zM92.1 223.6L93.6 222.6H106.8L105.5 223.6zM119.5 223.6L120.6 222.6H133.8L132.9 223.6zM133.2 223.6L134.1 222.6H147.2L146.6 223.6zM188 223.6L188 222.6H201.2L201.4 223.6zM297.7 223.6L295.8 222.6H309L311.1 223.6zM325.1 223.6L322.7 222.6H335.9L338.5 223.6zM112.1 222.4L113.3 221.4H126.3L125.3 222.4zM166 222.4L166.3 221.4H179.3L179.2 222.4zM193 222.4L192.8 221.4H205.8L206.1 222.4zM233.4 222.4L232.6 221.4H245.5L246.6 222.4zM65.2 221.3L67.2 220.3H79.9L78.2 221.3zM118.2 221.3L119.3 220.3H132.1L131.2 221.3zM224.2 221.3L223.6 220.3H236.3L237.2 221.3zM237.5 221.3L236.6 220.3H249.4L250.4 221.3zM303.7 221.3L301.8 220.3H314.5L316.7 221.3zM317 221.3L314.8 220.3H327.6L330 221.3zM46 220.2L48.2 219.3H60.7L58.7 220.2zM59 220.2L61 219.3H73.6L71.7 220.2zM85.1 220.2L86.7 219.3H99.2L97.8 220.2zM137.2 220.2L138 219.3H150.5L149.9 220.2zM176.3 220.2L176.4 219.3H189L189 220.2zM202.4 220.2L202.1 219.3H214.6L215.1 220.2zM228.4 220.2L227.7 219.3H240.2L241.2 220.2zM319.7 220.2L317.5 219.3H330L332.4 220.2zM27.3 219.1L29.8 218.2H42.1L39.8 219.1zM129.9 219.1L130.8 218.2H143.1L142.4 219.1zM142.7 219.1L143.4 218.2H155.7L155.2 219.1zM219.6 219.1L219.1 218.2H231.4L232.2 219.1zM245.3 219.1L244.3 218.2H256.6L257.8 219.1zM270.9 219.1L269.6 218.2H281.9L283.5 219.1zM283.8 219.1L282.2 218.2H294.5L296.3 219.1zM309.4 219.1L307.4 218.2H319.7L321.9 219.1zM322.2 219.1L320 218.2H332.4L334.7 219.1zM59.7 218.1L61.7 217.2H73.8L72 218.1zM110.2 218.1L111.4 217.2H123.5L122.5 218.1zM148.1 218.1L148.6 217.2H160.8L160.4 218.1zM173.3 218.1L173.5 217.2H185.6L185.6 218.1zM185.9 218.1L185.9 217.2H198L198.2 218.1zM223.8 218.1L223.2 217.2H235.3L236.1 218.1zM286.9 218.1L285.3 217.2H297.4L299.2 218.1zM78.7 217.1L80.4 216.3H92.3L90.8 217.1zM116 217.1L117 216.3H129L128.1 217.1zM178.1 217.1L178.2 216.3H190.1L190.2 217.1zM202.9 217.1L202.6 216.3H214.6L215 217.1zM227.8 217.1L227.1 216.3H239L239.9 217.1zM23.7 216.1L26.2 215.5H37.9L35.7 216.1zM48.2 216.1L50.3 215.5H62L60.1 216.1zM194.9 216.1L194.8 215.5H206.5L206.9 216.1zM219.4 216.1L218.9 215.5H230.6L231.3 216.1zM305 216.1L303.2 215.5H314.9L316.9 216.1zM317.2 216.1L315.2 215.5H326.9L329.1 216.1z" fill="#9b9b9b"/><path d="M36.2 315.6L42 309.7H51.4L46 315.6zM78.8 315.6L82.9 309.7H92.4L88.7 315.6zM196.1 315.6L195.6 309.7H205.1L205.9 315.6zM228 315.6L226.4 309.7H235.8L237.9 315.6zM15.2 303.5L21.3 298.6H30L24.2 303.5zM34.9 303.5L40.3 298.6H49L44 303.5zM212.4 303.5L211.5 298.6H220.2L221.5 303.5zM311 303.5L306.5 298.6H315.2L320.1 303.5zM157.9 298.2L158.9 293.5H167.3L166.6 298.2zM167.4 298.2L168.1 293.5H176.4L176.1 298.2zM272 298.2L269 293.5H277.4L280.7 298.2zM291 298.2L287.4 293.5H295.7L299.7 298.2zM310 298.2L305.7 293.5H314.1L318.7 298.2zM-2.9 293.1L3.4 288.9H11.5L5.5 293.1zM6.3 293.1L12.3 288.9H20.4L14.6 293.1zM33.8 293.1L38.9 288.9H47L42.2 293.1zM79.7 293.1L83.2 288.9H91.3L88.1 293.1zM88.9 293.1L92.1 288.9H100.2L97.2 293.1zM199 293.1L198.5 288.9H206.6L207.4 293.1zM59.9 288.5L64 284.5H71.8L68 288.5zM86.5 288.5L89.7 284.5H97.5L94.6 288.5zM130.9 288.5L132.6 284.5H140.4L138.9 288.5zM157.5 288.5L158.4 284.5H166.2L165.5 288.5zM192.9 288.5L192.7 284.5H200.5L201 288.5zM246.2 288.5L244.2 284.5H252L254.2 288.5zM281.6 288.5L278.5 284.5H286.3L289.7 288.5zM67.2 284.1L70.9 280.4H78.4L74.9 284.1zM101.5 284.1L104.1 280.4H111.6L109.3 284.1zM290.3 284.1L287 280.4H294.5L298 284.1zM-9.1 280L-3.2 276.6H4L-1.6 280zM40.7 280L45.1 276.6H52.4L48.2 280zM123.8 280L125.7 276.6H133L131.3 280zM148.8 280L149.9 276.6H157.1L156.3 280zM273.4 280L270.7 276.6H278L280.9 280zM80.3 276.2L83.5 273H90.5L87.6 276.2zM160.9 276.2L161.6 273H168.7L168.2 276.2zM169 276.2L169.5 273H176.5L176.2 276.2zM273.7 276.2L271.1 273H278.1L281 276.2zM313 272.7L309.3 269.5H316.3L320.2 272.7zM114.7 269.2L116.7 266.3H123.4L121.7 269.2zM145.1 269.2L146.2 266.3H153L152 269.2zM160.2 269.2L160.9 266.3H167.7L167.2 269.2zM190.6 269.2L190.5 266.3H197.2L197.6 269.2zM205.8 269.2L205.2 266.3H212L212.8 269.2zM60.3 266L63.7 263.3H70.3L67.1 266zM89.9 266L92.5 263.3H99L96.6 266zM222.7 266L221.7 263.3H228.3L229.5 266zM274.4 266L272 263.3H278.5L281.2 266zM318.7 266L315 263.3H321.6L325.5 266zM80.8 263L83.5 260.4H89.9L87.3 263zM95.1 263L97.5 260.4H103.9L101.7 263zM145.4 263L146.4 260.4H152.8L152 263zM195.6 263L195.4 260.4H201.8L202.2 263zM260.3 263L258.3 260.4H264.7L266.8 263zM30.2 260.1L34.2 257.7H40.4L36.6 260.1zM135 260.1L136.3 257.7H142.5L141.4 260.1zM156 260.1L156.8 257.7H163L162.4 260.1zM170 260.1L170.4 257.7H176.6L176.4 260.1zM204.9 260.1L204.4 257.7H210.6L211.3 260.1zM309.8 260.1L306.6 257.7H312.8L316.2 260.1zM23.1 257.4L27.2 255.1H33.2L29.3 257.4zM50.3 257.4L53.7 255.1H59.8L56.5 257.4zM145.7 257.4L146.7 255.1H152.7L151.9 257.4zM186.5 257.4L186.5 255.1H192.5L192.7 257.4zM213.8 257.4L213 255.1H219.1L220 257.4zM247.8 257.4L246.2 255.1H252.3L254 257.4zM254.6 257.4L252.9 255.1H258.9L260.8 257.4zM275.1 257.4L272.8 255.1H278.8L281.3 257.4zM49.5 254.8L52.9 252.6H58.7L55.6 254.8zM189 254.8L188.9 252.6H194.7L195 254.8zM208.9 254.8L208.3 252.6H214.2L214.9 254.8zM341.6 254.8L337.8 252.6H343.7L347.7 254.8zM61.7 252.3L64.7 250.3H70.4L67.6 252.3zM243.1 252.3L241.7 250.3H247.4L248.9 252.3zM105 250L106.8 248H112.4L110.7 250zM244 250L242.6 248H248.2L249.7 250zM263 250L261.2 248H266.7L268.7 250zM275.6 250L273.5 248H279.1L281.3 250zM332.5 250L329.1 248H334.6L338.2 250zM47.4 247.7L50.5 245.9H56L53 247.7zM115.3 247.7L116.9 245.9H122.3L120.9 247.7zM140 247.7L141 245.9H146.5L145.6 247.7zM170.9 247.7L171.2 245.9H176.6L176.4 247.7zM331.4 247.7L328 245.9H333.4L336.9 247.7zM4.5 245.6L8.6 243.8H13.9L10 245.6zM22.6 245.6L26.3 243.8H31.6L28.1 245.6zM28.7 245.6L32.2 243.8H37.4L34.1 245.6zM269.9 245.6L268 243.8H273.3L275.4 245.6zM300.1 245.6L297.5 243.8H302.8L305.5 245.6zM312.1 245.6L309.3 243.8H314.6L317.6 245.6zM63.7 243.7L66.3 241.9H71.8L69.3 243.7zM211.1 243.7L210.5 241.9H216L216.7 243.7zM270.1 243.7L268.2 241.9H273.7L275.7 243.7zM287.8 243.7L285.5 241.9H291L293.4 243.7zM305.5 243.7L302.8 241.9H308.3L311 243.7zM-2.1 241.7L1.9 240H12.9L9.1 241.7zM78.7 241.7L80.9 240H91.9L89.9 241.7zM159.4 241.7L160 240H171L170.7 241.7zM286.3 241.7L284.2 240H295.2L297.6 241.7zM28.7 239.9L31.9 238.2H42.7L39.7 239.9zM58.1 238.1L60.7 236.5H71.3L68.9 238.1zM223.9 238.1L223.2 236.5H233.7L234.7 238.1zM301.3 238.1L298.9 236.5H309.5L312.1 238.1zM86.4 236.4L88.4 234.9H98.7L96.9 236.4zM151.4 236.4L152 234.9H162.4L161.9 236.4zM183.9 236.4L183.9 234.9H194.2L194.4 236.4zM272.7 234.7L271 233.3H281.1L283 234.7zM315.1 234.7L312.6 233.3H322.7L325.4 234.7zM25.2 233.1L28.3 231.8H38.2L35.3 233.1zM118.8 233.1L120.1 231.8H130L128.9 233.1zM181.2 233.1L181.3 231.8H191.2L191.3 233.1zM191.6 233.1L191.5 231.8H201.4L201.7 233.1zM285.2 233.1L283.3 231.8H293.2L295.3 233.1zM316.4 233.1L313.9 231.8H323.8L326.5 233.1zM68.7 230.2L70.8 228.9H80.4L78.4 230.2zM98.7 230.2L100.3 228.9H109.8L108.4 230.2zM178.7 230.2L178.9 228.9H188.4L188.5 230.2zM188.8 230.2L188.7 228.9H198.2L198.5 230.2zM15.6 228.7L18.7 227.5H28L25.1 228.7zM261.1 228.7L259.7 227.5H269L270.6 228.7zM280.7 228.7L279 227.5H288.3L290.2 228.7zM22.2 227.4L25.1 226.2H34.3L31.6 227.4zM80.1 227.4L82 226.2H91.1L89.4 227.4zM28.6 226.1L31.4 225H40.4L37.8 226.1zM47.6 226.1L50 225H59L56.8 226.1zM170.7 226.1L170.9 225H179.9L179.8 226.1zM265.3 226.1L263.9 225H272.9L274.5 226.1zM331.6 226.1L329 225H338L340.8 226.1zM6.9 224.8L10 223.7H18.9L15.9 224.8zM100 224.8L101.4 223.7H110.3L109 224.8zM146.5 224.8L147.1 223.7H156L155.5 224.8zM174.4 224.8L174.5 223.7H183.4L183.4 224.8zM183.7 224.8L183.7 223.7H192.5L192.7 224.8zM230.2 224.8L229.4 223.7H238.2L239.2 224.8zM267.4 224.8L265.9 223.7H274.8L276.4 224.8z" fill="#b3b3b3"/><path d="M142.8 315.6L144.4 309.7H153.9L152.6 315.6zM334.6 315.6L328.8 309.7H338.3L344.5 315.6zM97 309.3L100.3 303.9H109.3L106.4 309.3zM178.9 309.3L179.2 303.9H188.2L188.4 309.3zM230.2 309.3L228.5 303.9H237.6L239.6 309.3zM260.9 309.3L258.1 303.9H267.1L270.4 309.3zM271.2 309.3L267.9 303.9H277L280.6 309.3zM281.4 309.3L277.8 303.9H286.9L290.8 309.3zM291.6 309.3L287.7 303.9H296.7L301.1 309.3zM301.9 309.3L297.5 303.9H306.6L311.3 309.3zM322.4 309.3L317.3 303.9H326.3L331.8 309.3zM5.3 303.5L11.8 298.6H20.5L14.4 303.5zM54.6 303.5L59.3 298.6H68L63.7 303.5zM84.2 303.5L87.9 298.6H96.6L93.3 303.5zM94.1 303.5L97.4 298.6H106.1L103.1 303.5zM113.8 303.5L116.4 298.6H125.1L122.9 303.5zM123.7 303.5L125.9 298.6H134.6L132.7 303.5zM173 303.5L173.4 298.6H182.1L182 303.5zM261.7 303.5L259 298.6H267.7L270.8 303.5zM271.6 303.5L268.5 298.6H277.2L280.7 303.5zM281.5 303.5L278 298.6H286.7L290.5 303.5zM301.2 303.5L297 298.6H305.7L310.2 303.5zM320.9 303.5L316 298.6H324.7L330 303.5zM340.6 303.5L335 298.6H343.8L349.7 303.5zM15.3 298.2L21.2 293.5H29.6L24 298.2zM34.3 298.2L39.6 293.5H48L43 298.2zM43.8 298.2L48.8 293.5H57.1L52.5 298.2zM107.2 293.1L109.8 288.9H117.9L115.6 293.1zM299.9 293.1L296.1 288.9H304.1L308.3 293.1zM327.5 293.1L322.7 288.9H330.8L335.8 293.1zM6.7 288.5L12.5 284.5H20.3L14.8 288.5zM77.6 288.5L81.1 284.5H88.9L85.7 288.5zM95.4 288.5L98.3 284.5H106.1L103.5 288.5zM113.1 288.5L115.5 284.5H123.3L121.2 288.5zM184.1 288.5L184.1 284.5H191.9L192.1 288.5zM263.9 288.5L261.3 284.5H269.1L272 288.5zM290.5 288.5L287.1 284.5H294.9L298.6 288.5zM299.4 288.5L295.7 284.5H303.4L307.4 288.5zM7.1 284.1L12.7 280.4H20.2L14.9 284.1zM32.8 284.1L37.6 280.4H45.2L40.6 284.1zM144.4 284.1L145.7 280.4H153.2L152.2 284.1zM153 284.1L154 280.4H161.5L160.7 284.1zM170.1 284.1L170.6 280.4H178.1L177.9 284.1zM195.9 284.1L195.5 280.4H203L203.6 284.1zM230.2 284.1L228.8 280.4H236.3L238 284.1zM247.4 284.1L245.4 280.4H252.9L255.1 284.1zM316 284.1L311.9 280.4H319.4L323.8 284.1zM-.8 280L4.8 276.6H12.1L6.7 280zM82.3 280L85.4 276.6H92.7L89.8 280zM98.9 280L101.5 276.6H108.8L106.4 280zM132.1 280L133.8 276.6H141L139.6 280zM165.4 280L166 276.6H173.2L172.9 280zM206.9 280L206.3 276.6H213.5L214.4 280zM223.5 280L222.4 276.6H229.6L231.1 280zM231.9 280L230.4 276.6H237.7L239.4 280zM248.5 280L246.6 276.6H253.8L256 280zM315 280L311 276.6H318.3L322.5 280zM331.6 280L327.1 276.6H334.4L339.1 280zM-8.3 276.2L-2.5 273H4.5L-1 276.2zM23.9 276.2L28.7 273H35.7L31.2 276.2zM48.1 276.2L52.2 273H59.2L55.4 276.2zM120.6 276.2L122.5 273H129.6L127.9 276.2zM177 276.2L177.3 273H184.3L184.3 276.2zM241.5 276.2L239.8 273H246.8L248.7 276.2zM47.2 272.7L51.1 269.5H58.1L54.4 272.7zM55 272.7L58.7 269.5H65.7L62.2 272.7zM86.2 272.7L89.1 269.5H96.1L93.5 272.7zM101.9 272.7L104.3 269.5H111.3L109.1 272.7zM109.7 272.7L111.9 269.5H118.9L116.9 272.7zM203.5 272.7L203 269.5H210L210.7 272.7zM211.3 272.7L210.6 269.5H217.6L218.6 272.7zM234.8 272.7L233.4 269.5H240.4L242 272.7zM250.4 272.7L248.6 269.5H255.5L257.6 272.7zM289.5 272.7L286.5 269.5H293.5L296.7 272.7zM221 269.2L220 266.3H226.8L228 269.2zM228.6 269.2L227.4 266.3H234.2L235.6 269.2zM296.9 269.2L293.8 266.3H300.6L303.9 269.2zM-6.1 266L-.9 263.3H5.7L.7 266zM53 266L56.6 263.3H63.1L59.7 266zM75.1 266L78.1 263.3H84.7L81.9 266zM82.5 266L85.3 263.3H91.9L89.3 266zM112 266L114 263.3H120.6L118.8 266zM126.8 266L128.4 263.3H134.9L133.6 266zM134.2 266L135.5 263.3H142.1L140.9 266zM193.2 266L193 263.3H199.6L200 266zM215.3 266L214.5 263.3H221.1L222.1 266zM333.4 266L329.4 263.3H336L340.2 266zM-5.4 263L-.4 260.4H6L1.2 263zM16.1 263L20.6 260.4H27L22.7 263zM66.4 263L69.5 260.4H75.9L73 263zM210 263L209.3 260.4H215.7L216.6 263zM317.7 263L314.2 260.4H320.6L324.3 263zM339.2 263L335.2 260.4H341.6L345.8 263zM-4.8 260.1L.1 257.7H6.4L1.6 260.1zM86.1 260.1L88.7 257.7H94.9L92.5 260.1zM121.1 260.1L122.7 257.7H128.9L127.5 260.1zM128.1 260.1L129.5 257.7H135.7L134.4 260.1zM142 260.1L143.1 257.7H149.4L148.4 260.1zM163 260.1L163.6 257.7H169.8L169.4 260.1zM211.9 260.1L211.2 257.7H217.5L218.3 260.1zM218.9 260.1L218.1 257.7H224.3L225.3 260.1zM246.9 260.1L245.3 257.7H251.5L253.3 260.1zM260.9 260.1L258.9 257.7H265.1L267.3 260.1zM267.9 260.1L265.7 257.7H271.9L274.2 260.1zM288.8 260.1L286.2 257.7H292.4L295.2 260.1zM302.8 260.1L299.8 257.7H306L309.2 260.1zM2.7 257.4L7.3 255.1H13.3L8.9 257.4zM43.5 257.4L47.1 255.1H53.1L49.7 257.4zM57.1 257.4L60.4 255.1H66.4L63.3 257.4zM98 257.4L100.2 255.1H106.2L104.2 257.4zM118.4 257.4L120.1 255.1H126.1L124.6 257.4zM125.2 257.4L126.7 255.1H132.8L131.4 257.4zM166.1 257.4L166.6 255.1H172.6L172.3 257.4zM281.9 257.4L279.4 255.1H285.5L288.1 257.4zM288.7 257.4L286.1 255.1H292.1L294.9 257.4zM295.5 257.4L292.7 255.1H298.8L301.7 257.4zM343.2 257.4L339.2 255.1H345.2L349.4 257.4zM-3.6 254.8L1.1 252.6H6.9L2.5 254.8zM62.8 254.8L65.8 252.6H71.7L68.9 254.8zM69.5 254.8L72.3 252.6H78.2L75.5 254.8zM89.4 254.8L91.7 252.6H97.6L95.4 254.8zM109.3 254.8L111.2 252.6H117L115.3 254.8zM162.4 254.8L163 252.6H168.8L168.4 254.8zM169 254.8L169.4 252.6H175.3L175.1 254.8zM222.1 254.8L221.2 252.6H227.1L228.2 254.8zM255.3 254.8L253.6 252.6H259.5L261.4 254.8zM262 254.8L260.1 252.6H266L268 254.8zM295.2 254.8L292.5 252.6H298.3L301.2 254.8zM328.4 254.8L324.9 252.6H330.7L334.4 254.8zM335 254.8L331.3 252.6H337.2L341 254.8zM22.9 252.3L26.8 250.3H32.5L28.8 252.3zM107.1 252.3L108.9 250.3H114.7L112.9 252.3zM204.2 252.3L203.8 250.3H209.5L210.1 252.3zM230.1 252.3L229 250.3H234.8L236 252.3zM256 252.3L254.3 250.3H260L261.9 252.3zM262.5 252.3L260.6 250.3H266.4L268.4 252.3zM281.9 252.3L279.6 250.3H285.3L287.8 252.3zM327.2 252.3L323.8 250.3H329.6L333.1 252.3zM29.1 250L32.8 248H38.3L34.8 250zM161.9 250L162.4 248H168L167.6 250zM174.5 250L174.7 248H180.3L180.2 250zM199.8 250L199.4 248H205L205.5 250zM218.7 250L218 248H223.5L224.5 250zM281.9 250L279.7 248H285.3L287.7 250zM300.9 250L298.2 248H303.8L306.6 250zM313.5 250L310.5 248H316.1L319.3 250zM338.8 250L335.2 248H340.8L344.5 250zM28.9 247.7L32.5 245.9H37.9L34.5 247.7zM53.6 247.7L56.6 245.9H62L59.1 247.7zM109.1 247.7L110.9 245.9H116.3L114.7 247.7zM232.6 247.7L231.5 245.9H236.9L238.2 247.7zM238.8 247.7L237.5 245.9H243L244.3 247.7zM257.3 247.7L255.6 245.9H261.1L262.8 247.7zM269.6 247.7L267.7 245.9H273.1L275.2 247.7zM325.2 247.7L322 245.9H327.4L330.8 247.7zM16.6 245.6L20.4 243.8H25.7L22 245.6zM58.8 245.6L61.6 243.8H66.9L64.2 245.6zM82.9 245.6L85.2 243.8H90.5L88.4 245.6zM95 245.6L97 243.8H102.3L100.4 245.6zM107.1 245.6L108.8 243.8H114.1L112.5 245.6zM125.2 245.6L126.5 243.8H131.8L130.6 245.6zM149.3 245.6L150.1 243.8H155.4L154.7 245.6zM227.7 245.6L226.8 243.8H232.1L233.1 245.6zM233.7 245.6L232.7 243.8H238L239.2 245.6zM257.9 245.6L256.2 243.8H261.5L263.3 245.6zM318.2 245.6L315.2 243.8H320.5L323.6 245.6zM330.2 245.6L327 243.8H332.3L335.7 245.6zM10.6 243.7L14.4 241.9H19.9L16.2 243.7zM16.5 243.7L20.2 241.9H25.6L22.1 243.7zM34.2 243.7L37.5 241.9H43L39.8 243.7zM51.9 243.7L54.8 241.9H60.3L57.5 243.7zM87.3 243.7L89.4 241.9H94.9L92.9 243.7zM93.2 243.7L95.2 241.9H100.6L98.8 243.7zM128.5 243.7L129.8 241.9H135.2L134.1 243.7zM169.8 243.7L170.2 241.9H175.6L175.4 243.7zM258.3 243.7L256.7 241.9H262.1L263.9 243.7zM113.3 241.7L114.8 240H125.8L124.5 241.7zM147.9 241.7L148.7 240H159.7L159.1 241.7zM194 241.7L193.8 240H204.8L205.3 241.7zM205.6 241.7L205.1 240H216.1L216.8 241.7zM320.9 241.7L318 240H329L332.2 241.7zM6.1 239.9L9.8 238.2H20.6L17.1 239.9zM40 239.9L43 238.2H53.8L51 239.9zM175.4 239.9L175.6 238.2H186.4L186.4 239.9zM186.7 239.9L186.7 238.2H197.5L197.7 239.9zM198 239.9L197.8 238.2H208.5L209 239.9zM254.5 239.9L253 238.2H263.8L265.5 239.9zM288.3 239.9L286.2 238.2H296.9L299.3 239.9zM310.9 239.9L308.3 238.2H319L321.9 239.9zM333.5 239.9L330.4 238.2H341.1L344.5 239.9zM13.9 238.1L17.4 236.5H28L24.7 238.1zM25 238.1L28.3 236.5H38.8L35.7 238.1zM146.6 238.1L147.4 236.5H157.9L157.3 238.1zM168.7 238.1L169 236.5H179.5L179.4 238.1zM212.9 238.1L212.3 236.5H222.9L223.6 238.1zM235 238.1L234 236.5H244.5L245.8 238.1zM279.2 238.1L277.3 236.5H287.8L290 238.1zM312.4 238.1L309.8 236.5H320.3L323.1 238.1zM334.5 238.1L331.4 236.5H341.9L345.2 238.1zM21.4 236.4L24.7 234.9H35L32 236.4zM108.1 236.4L109.6 234.9H119.9L118.6 236.4zM118.9 236.4L120.2 234.9H130.5L129.4 236.4zM129.7 236.4L130.8 234.9H141.1L140.2 236.4zM162.2 236.4L162.7 234.9H173L172.7 236.4zM335.4 236.4L332.4 234.9H342.7L346 236.4zM-13.8 234.7L-9.9 233.3H.2L-3.5 234.7zM60.5 234.7L62.9 233.3H73L70.8 234.7zM71.1 234.7L73.3 233.3H83.4L81.4 234.7zM92.3 234.7L94.1 233.3H104.2L102.6 234.7zM102.9 234.7L104.5 233.3H114.6L113.2 234.7zM134.8 234.7L135.7 233.3H145.8L145.1 234.7zM156 234.7L156.5 233.3H166.6L166.3 234.7zM166.6 234.7L166.9 233.3H177L176.9 234.7zM187.8 234.7L187.8 233.3H197.9L198.1 234.7zM240.8 234.7L239.8 233.3H249.9L251.2 234.7zM251.5 234.7L250.2 233.3H260.3L261.8 234.7zM129.2 233.1L130.3 231.8H140.2L139.3 233.1zM306 233.1L303.7 231.8H313.6L316.1 233.1zM337.2 233.1L334.3 231.8H344.2L347.3 233.1zM-8.7 231.6L-5.1 230.3H4.6L1.2 231.6zM11.7 231.6L14.9 230.3H24.7L21.6 231.6zM52.5 231.6L55 230.3H64.7L62.4 231.6zM72.9 231.6L75 230.3H84.7L82.8 231.6zM164.6 231.6L165 230.3H174.7L174.5 231.6zM297.2 231.6L295.1 230.3H304.8L307.1 231.6zM88.7 230.2L90.5 228.9H100L98.4 230.2zM218.8 230.2L218.1 228.9H227.7L228.5 230.2zM248.8 230.2L247.6 228.9H257.1L258.5 230.2zM288.8 230.2L286.9 228.9H296.4L298.5 230.2zM308.8 230.2L306.5 228.9H316L318.5 230.2zM64.7 228.7L66.9 227.5H76.2L74.2 228.7zM103.9 228.7L105.4 227.5H114.8L113.5 228.7zM172.7 228.7L172.9 227.5H182.2L182.2 228.7zM182.5 228.7L182.5 227.5H191.9L192 228.7zM329.8 228.7L327.2 227.5H336.5L339.3 228.7zM-6.7 227.4L-3.3 226.2H5.9L2.6 227.4zM118.6 227.4L119.8 226.2H129L128 227.4zM234.3 227.4L233.4 226.2H242.6L243.7 227.4zM263.2 227.4L261.8 226.2H271L272.6 227.4zM321.1 227.4L318.6 226.2H327.8L330.4 227.4zM.2 226.1L3.5 225H12.5L9.4 226.1zM9.7 226.1L12.8 225H21.8L18.9 226.1zM161.2 226.1L161.6 225H170.6L170.4 226.1zM208.5 226.1L208.1 225H217.1L217.7 226.1zM227.5 226.1L226.7 225H235.7L236.6 226.1zM322.1 226.1L319.7 225H328.7L331.3 226.1zM16.2 224.8L19.2 223.7H28L25.2 224.8zM25.5 224.8L28.3 223.7H37.1L34.5 224.8zM53.4 224.8L55.7 223.7H64.6L62.4 224.8zM62.7 224.8L64.9 223.7H73.7L71.7 224.8zM118.6 224.8L119.7 223.7H128.5L127.6 224.8zM193 224.8L192.8 223.7H201.7L202 224.8zM239.5 224.8L238.5 223.7H247.4L248.5 224.8z" fill="#868686"/><path d="M-17.1 315.6L-9.3 309.7H.2L-7.3 315.6zM238.7 315.6L236.6 309.7H246.1L248.6 315.6zM313.3 315.6L308.3 309.7H317.8L323.2 315.6zM15 309.3L21.4 303.9H30.4L24.5 309.3zM56 309.3L60.8 303.9H69.9L65.4 309.3zM240.4 309.3L238.4 303.9H247.4L249.9 309.3zM74.3 303.5L78.3 298.6H87.1L83.4 303.5zM133.5 303.5L135.4 298.6H144.1L142.6 303.5zM153.2 303.5L154.4 298.6H163.1L162.3 303.5zM163.1 303.5L163.9 298.6H172.6L172.2 303.5zM232.1 303.5L230.5 298.6H239.2L241.2 303.5zM243.5 298.2L241.5 293.5H249.8L252.2 298.2zM329.1 298.2L324.1 293.5H332.4L337.8 298.2zM52.2 293.1L56.6 288.9H64.7L60.5 293.1zM116.4 293.1L118.7 288.9H126.8L124.8 293.1zM336.6 293.1L331.6 288.9H339.6L345 293.1zM237.3 288.5L235.6 284.5H243.4L245.4 288.5zM343.7 288.5L338.6 284.5H346.3L351.8 288.5zM-1.5 284.1L4.4 280.4H11.9L6.3 284.1zM110.1 284.1L112.4 280.4H119.9L117.8 284.1zM135.8 284.1L137.4 280.4H144.9L143.6 284.1zM213 284.1L212.2 280.4H219.7L220.8 284.1zM7.5 280L12.9 276.6H20.2L15 280zM290 280L286.8 276.6H294.1L297.5 280zM32 276.2L36.5 273H43.6L39.3 276.2zM112.6 276.2L114.7 273H121.7L119.8 276.2zM128.7 276.2L130.4 273H137.4L135.9 276.2zM144.8 276.2L146 273H153L152.1 276.2zM225.4 276.2L224.2 273H231.2L232.6 276.2zM265.6 276.2L263.3 273H270.3L272.9 276.2zM338.2 276.2L333.6 273H340.6L345.4 276.2zM167.8 269.2L168.3 266.3H175.1L174.8 269.2zM259 269.2L256.9 266.3H263.7L265.9 269.2zM304.5 269.2L301.2 266.3H308L311.5 269.2zM67.7 266L70.9 263.3H77.5L74.5 266zM104.6 266L106.8 263.3H113.4L111.4 266zM148.9 266L149.9 263.3H156.5L155.7 266zM259.6 266L257.6 263.3H264.2L266.4 266zM326.1 266L322.2 263.3H328.8L332.8 266zM109.5 263L111.5 260.4H117.9L116.1 263zM159.7 263L160.4 260.4H166.8L166.3 263zM245.9 263L244.3 260.4H250.7L252.5 263zM253.1 263L251.3 260.4H257.7L259.7 263zM281.8 263L279.2 260.4H285.6L288.4 263zM2.2 260.1L7 257.7H13.2L8.6 260.1zM107.1 260.1L109.1 257.7H115.3L113.5 260.1zM281.8 260.1L279.3 257.7H285.6L288.2 260.1zM295.8 260.1L293 257.7H299.2L302.2 260.1zM330.8 260.1L327 257.7H333.2L337.2 260.1zM9.5 257.4L13.9 255.1H19.9L15.7 257.4zM70.8 257.4L73.6 255.1H79.7L77 257.4zM104.8 257.4L106.8 255.1H112.9L111 257.4zM152.5 257.4L153.3 255.1H159.3L158.7 257.4zM159.3 257.4L159.9 255.1H166L165.5 257.4zM315.9 257.4L312.6 255.1H318.7L322.1 257.4zM336.3 257.4L332.5 255.1H338.6L342.6 257.4zM3.1 254.8L7.5 252.6H13.4L9.1 254.8zM76.1 254.8L78.8 252.6H84.7L82.1 254.8zM82.7 254.8L85.3 252.6H91.1L88.8 254.8zM-9.5 252.3L-4.8 250.3H.9L-3.6 252.3zM94.1 252.3L96.3 250.3H102L100 252.3zM294.9 252.3L292.2 250.3H298L300.7 252.3zM301.3 252.3L298.6 250.3H304.3L307.2 252.3zM333.7 252.3L330.2 250.3H335.9L339.6 252.3zM67 250L69.8 248H75.4L72.8 250zM73.4 250L76 248H81.6L79.1 250zM92.3 250L94.5 248H100.1L98 250zM146.2 247.7L147.1 245.9H152.5L151.7 247.7zM251.1 247.7L249.6 245.9H255L256.7 247.7zM288.1 247.7L285.8 245.9H291.2L293.7 247.7zM300.5 247.7L297.9 245.9H303.3L306.1 247.7zM-7.5 245.6L-3.2 243.8H2.1L-2.1 245.6zM89 245.6L91.1 243.8H96.4L94.4 245.6zM113.1 245.6L114.7 243.8H120L118.5 245.6zM336.3 245.6L332.9 243.8H338.2L341.7 245.6zM-1.2 243.7L2.9 241.9H8.3L4.4 243.7zM57.8 243.7L60.6 241.9H66L63.4 243.7zM140.3 243.7L141.3 241.9H146.8L145.9 243.7zM175.7 243.7L175.9 241.9H181.4L181.3 243.7zM-13.6 241.7L-9.4 240H1.6L-2.4 241.7zM297.9 241.7L295.5 240H306.4L309.1 241.7zM62.5 239.9L65.1 238.2H75.9L73.5 239.9zM107.7 239.9L109.3 238.2H120.1L118.7 239.9zM243.2 239.9L242 238.2H252.7L254.2 239.9zM277 239.9L275.1 238.2H285.9L288 239.9zM36 238.1L39.1 236.5H49.6L46.8 238.1zM113.4 238.1L114.9 236.5H125.4L124.2 238.1zM135.5 238.1L136.5 236.5H147.1L146.3 238.1zM64.8 236.4L67.2 234.9H77.5L75.3 236.4zM140.5 236.4L141.4 234.9H151.7L151.1 236.4zM173 236.4L173.3 234.9H183.6L183.6 236.4zM205.5 236.4L205.1 234.9H215.4L216 236.4zM81.7 234.7L83.7 233.3H93.8L92 234.7zM113.5 234.7L114.9 233.3H125L123.8 234.7zM177.2 234.7L177.3 233.3H187.5L187.5 234.7zM283.3 234.7L281.4 233.3H291.5L293.6 234.7zM46 233.1L48.7 231.8H58.6L56.1 233.1zM150 233.1L150.7 231.8H160.6L160.1 233.1zM233.2 233.1L232.3 231.8H242.2L243.3 233.1zM264.4 233.1L262.9 231.8H272.8L274.5 233.1zM327.8 231.6L325.1 230.3H334.8L337.7 231.6zM18.6 230.2L21.7 228.9H31.3L28.4 230.2zM58.7 230.2L61 228.9H70.5L68.4 230.2zM148.7 230.2L149.4 228.9H158.9L158.4 230.2zM-4.1 228.7L-.6 227.5H8.7L5.4 228.7zM5.7 228.7L9 227.5H18.4L15.3 228.7zM25.4 228.7L28.3 227.5H37.6L34.9 228.7zM84.3 228.7L86.1 227.5H95.5L93.8 228.7zM143.2 228.7L144 227.5H153.3L152.7 228.7zM320 228.7L317.5 227.5H326.9L329.5 228.7zM253.6 227.4L252.4 226.2H261.5L262.9 227.4zM-9.2 226.1L-5.8 225H3.2L-.1 226.1zM151.7 226.1L152.3 225H161.3L160.9 226.1zM218 226.1L217.4 225H226.4L227.2 226.1zM44.1 224.8L46.6 223.7H55.4L53.1 224.8zM155.8 224.8L156.3 223.7H165.1L164.8 224.8z" fill="#747474"/><path d="M4.2 315.6L11.2 309.7H20.7L14.1 315.6zM46.8 315.6L52.2 309.7H61.7L56.7 315.6zM68.2 315.6L72.7 309.7H82.1L78 315.6zM153.4 315.6L154.7 309.7H164.1L163.3 315.6zM185.4 315.6L185.4 309.7H194.8L195.3 315.6zM281.3 315.6L277.6 309.7H287.1L291.2 315.6zM345.3 315.6L339.1 309.7H348.5L355.1 315.6zM45.8 309.3L51 303.9H60L55.2 309.3zM66.2 309.3L70.7 303.9H79.8L75.7 309.3zM158.5 309.3L159.5 303.9H168.5L167.9 309.3zM168.7 309.3L169.3 303.9H178.4L178.1 309.3zM-4.6 303.5L2.3 298.6H11L4.5 303.5zM182.8 303.5L182.9 298.6H191.6L191.9 303.5zM192.7 303.5L192.4 298.6H201.1L201.8 303.5zM242 303.5L240 298.6H248.7L251.1 303.5zM186.4 298.2L186.4 293.5H194.8L195.2 298.2zM319.5 298.2L314.9 293.5H323.3L328.3 298.2zM15.4 293.1L21.2 288.9H29.2L23.8 293.1zM24.6 293.1L30 288.9H38.1L33 293.1zM162.3 293.1L163.1 288.9H171.1L170.7 293.1zM180.6 293.1L180.8 288.9H188.9L189 293.1zM189.8 293.1L189.7 288.9H197.7L198.2 293.1zM217.3 293.1L216.3 288.9H224.3L225.7 293.1zM254 293.1L251.7 288.9H259.8L262.4 293.1zM-2.2 288.5L3.9 284.5H11.7L5.9 288.5zM42.2 288.5L46.8 284.5H54.6L50.2 288.5zM228.4 288.5L227 284.5H234.8L236.5 288.5zM317.1 288.5L312.8 284.5H320.6L325.2 288.5zM41.4 284.1L46 280.4H53.5L49.2 284.1zM178.7 284.1L178.9 280.4H186.4L186.5 284.1zM187.3 284.1L187.2 280.4H194.7L195.1 284.1zM238.8 284.1L237.1 280.4H244.6L246.6 284.1zM273.1 284.1L270.3 280.4H277.8L280.9 284.1zM57.3 280L61.2 276.6H68.5L64.8 280zM115.5 280L117.6 276.6H124.9L123 280zM15.9 276.2L20.9 273H27.9L23.1 276.2zM23.7 272.7L28.3 269.5H35.3L30.9 272.7zM39.3 272.7L43.5 269.5H50.5L46.6 272.7zM70.6 272.7L73.9 269.5H80.9L77.8 272.7zM164.4 272.7L165 269.5H172L171.6 272.7zM242.6 272.7L241 269.5H248L249.8 272.7zM266.1 272.7L263.7 269.5H270.7L273.3 272.7zM320.8 272.7L316.9 269.5H323.9L328 272.7zM.8 269.2L5.9 266.3H12.7L7.8 269.2zM84.3 269.2L87.1 266.3H93.9L91.3 269.2zM152.6 269.2L153.6 266.3H160.3L159.6 269.2zM236.2 269.2L234.8 266.3H241.5L243.2 269.2zM119.4 266L121.2 263.3H127.8L126.2 266zM267 266L264.8 263.3H271.4L273.8 266zM9 263L13.6 260.4H20L15.5 263zM37.7 263L41.6 260.4H48L44.3 263zM73.6 263L76.5 260.4H82.9L80.2 263zM87.9 263L90.5 260.4H96.9L94.5 263zM131 263L132.5 260.4H138.8L137.6 263zM238.7 263L237.3 260.4H243.7L245.3 263zM324.9 263L321.2 260.4H327.6L331.5 263zM100.1 260.1L102.3 257.7H108.5L106.5 260.1zM114.1 260.1L115.9 257.7H122.1L120.5 260.1zM232.9 260.1L231.7 257.7H237.9L239.3 260.1zM274.8 260.1L272.5 257.7H278.7L281.2 260.1zM16.3 257.4L20.5 255.1H26.6L22.5 257.4zM193.3 257.4L193.1 255.1H199.2L199.5 257.4zM220.6 257.4L219.7 255.1H225.7L226.8 257.4zM322.7 257.4L319.3 255.1H325.3L328.9 257.4zM96 254.8L98.2 252.6H104.1L102.1 254.8zM102.7 254.8L104.7 252.6H110.6L108.7 254.8zM115.9 254.8L117.6 252.6H123.5L122 254.8zM235.4 254.8L234.2 252.6H240.1L241.5 254.8zM242.1 254.8L240.7 252.6H246.5L248.1 254.8zM301.8 254.8L298.9 252.6H304.8L307.8 254.8zM55.3 252.3L58.4 250.3H64.1L61.1 252.3zM74.7 252.3L77.3 250.3H83.1L80.6 252.3zM165.4 252.3L165.8 250.3H171.6L171.2 252.3zM197.7 252.3L197.4 250.3H203.2L203.6 252.3zM249.5 252.3L248 250.3H253.7L255.4 252.3zM307.8 252.3L304.9 250.3H310.6L313.7 252.3zM320.8 252.3L317.5 250.3H323.2L326.6 252.3zM-8.8 250L-4.3 248H1.3L-3.1 250zM98.6 250L100.7 248H106.2L104.4 250zM123.9 250L125.4 248H130.9L129.6 250zM130.2 250L131.5 248H137.1L136 250zM193.5 250L193.3 248H198.8L199.2 250zM250.3 250L248.8 248H254.4L256.1 250zM35.1 247.7L38.5 245.9H43.9L40.6 247.7zM59.7 247.7L62.6 245.9H68L65.3 247.7zM65.9 247.7L68.6 245.9H74.1L71.5 247.7zM72.1 247.7L74.7 245.9H80.1L77.7 247.7zM90.6 247.7L92.8 245.9H98.2L96.2 247.7zM127.6 247.7L129 245.9H134.4L133.2 247.7zM214.1 247.7L213.4 245.9H218.8L219.6 247.7zM40.7 245.6L43.9 243.8H49.2L46.1 245.6zM161.4 245.6L161.9 243.8H167.2L166.8 245.6zM191.5 245.6L191.4 243.8H196.7L196.9 245.6zM276 245.6L273.9 243.8H279.2L281.4 245.6zM306.1 245.6L303.4 243.8H308.7L311.5 245.6zM22.4 243.7L25.9 241.9H31.4L28 243.7zM75.5 243.7L77.9 241.9H83.3L81.1 243.7zM163.9 243.7L164.4 241.9H169.9L169.5 243.7zM234.7 243.7L233.6 241.9H239.1L240.3 243.7zM240.6 243.7L239.4 241.9H244.8L246.2 243.7zM281.9 243.7L279.7 241.9H285.2L287.5 243.7zM311.3 243.7L308.6 241.9H314.1L316.9 243.7zM334.9 243.7L331.7 241.9H337.1L340.5 243.7zM32.5 241.7L35.8 240H46.8L43.8 241.7zM67.1 241.7L69.7 240H80.6L78.4 241.7zM228.6 241.7L227.7 240H238.7L239.9 241.7zM73.8 239.9L76.2 238.2H86.9L84.8 239.9zM152.9 239.9L153.5 238.2H164.3L163.9 239.9zM220.6 239.9L219.9 238.2H230.6L231.6 239.9zM102.4 238.1L104.1 236.5H114.6L113.1 238.1zM216.3 236.4L215.7 234.9H226L226.9 236.4zM124.1 234.7L125.3 233.3H135.4L134.5 234.7zM35.6 233.1L38.5 231.8H48.4L45.7 233.1zM66.8 233.1L69.1 231.8H79L76.9 233.1zM170.8 233.1L171.1 231.8H181L180.9 233.1zM62.7 231.6L65 230.3H74.7L72.6 231.6zM215.6 231.6L215.1 230.3H224.8L225.5 231.6zM256.4 231.6L255.1 230.3H264.8L266.3 231.6zM258.8 230.2L257.4 228.9H266.9L268.5 230.2zM113.8 228.7L115.1 227.5H124.4L123.3 228.7zM123.6 228.7L124.7 227.5H134L133.1 228.7zM153 228.7L153.6 227.5H163L162.6 228.7zM231.6 228.7L230.8 227.5H240.1L241.1 228.7zM41.5 227.4L44.1 226.2H53.2L50.8 227.4zM109 227.4L110.4 226.2H119.5L118.3 227.4zM176.5 227.4L176.6 226.2H185.8L185.8 227.4zM224.7 227.4L224 226.2H233.1L234 227.4zM244 227.4L242.9 226.2H252.1L253.3 227.4zM19.2 226.1L22.1 225H31.1L28.3 226.1zM132.8 226.1L133.7 225H142.7L142 226.1zM-11.7 224.8L-8.3 223.7H.6L-2.7 224.8zM295.3 224.8L293.4 223.7H302.2L304.3 224.8z" fill="#a1a1a1"/><rect y="215.5" width="339" height="98.5" filter="url(#grn)"/><rect y="215.5" width="339" height="30" fill="url(#gtop)"/><path d="M0 228.5Q120 231 242 228M252 228Q300 230 339 227.5M0 248.5Q120 252 242 249M252 249Q300 250 339 247M0 270Q120 274 242 271M252 271Q300 271 339 267" stroke="#505050" stroke-width="1.4" fill="none" opacity=".8"/><path d="M5.3 160V211M12.4 160V211M19.5 160V211M26.6 160V211M33.7 160V211M40.8 160V211M47.9 160V211M55 160V211M62.1 160V211M69.2 160V211M76.3 160V211M83.4 160V211M90.5 160V211M97.6 160V211M104.7 160V211M111.8 160V211M118.9 160V211M126 160V211M133.1 160V211M140.2 160V211M147.3 160V211M154.4 160V211M161.5 160V211M168.6 160V211M175.7 160V211M182.8 160V211M189.9 160V211M197 160V211M204.1 160V211M211.2 160V211M218.3 160V211M225.4 160V211M232.5 160V211M239.6 160V211M246.7 160V211M253.8 160V211M260.9 160V211M268 160V211M275.1 160V211M282.2 160V211M289.3 160V211M296.4 160V211M303.5 160V211M310.6 160V211M317.7 160V211M324.8 160V211M331.9 160V211" stroke="#aeaea7" stroke-width=".95"/><path d="M0 160.3H339" stroke="#b6b6b0" stroke-width="1.7"/><path d="M0 206.3H339M0 211.3H339" stroke="#a0a09b" stroke-width="1.7"/><path d="M65.8 157.5V218M209 157.5V216" stroke="#adada7" stroke-width="2.6"/><rect x="242.3" y="197" width="10" height="79.5" rx="1.5" fill="#aaaaa8"/><rect x="249.3" y="197" width="3" height="79.5" fill="#8c8c8a"/><rect x="242.3" y="197" width="1.5" height="79.5" fill="#9a9a98"/><path d="M242.3 228h10M242.3 249h10M242.3 270.5h10" stroke="#666" stroke-width="1.8"/><ellipse cx="247.3" cy="197.5" rx="5" ry="1.4" fill="#c2c2c0"/></svg>
<svg style="left:253.5px;top:43.3px;" width="6.5" height="7" viewBox="0 0 6.5 7"><path d="M.3 .3l4.2 3.2-4.2 3.2z" fill="#c4c4c6"/><path d="M5.6 0v7" stroke="#c4c4c6" stroke-width="1.1"/></svg>
<svg style="left:253.5px;top:336.5px;" width="6.5" height="7" viewBox="0 0 6.5 7"><path d="M.3 .3l4.2 3.2-4.2 3.2z" fill="#c4c4c6"/><path d="M5.6 0v7" stroke="#c4c4c6" stroke-width="1.1"/></svg>
<span class="t r " style="right:258.5px;top:35.5px;font-size:5.2px;color:#6e6e70;letter-spacing:-.2px">0 -</span>
<span class="t r " style="right:258.5px;top:74.3px;font-size:5.2px;color:#6e6e70;letter-spacing:-.2px">-5 -</span>
<span class="t r " style="right:258.5px;top:111.5px;font-size:5.2px;color:#6e6e70;letter-spacing:-.2px">-10 -</span>
<span class="t r " style="right:258.5px;top:149.3px;font-size:5.2px;color:#6e6e70;letter-spacing:-.2px">-15 -</span>
<span class="t r " style="right:258.5px;top:187px;font-size:5.2px;color:#6e6e70;letter-spacing:-.2px">-20 -</span>
<span class="t r " style="right:258.5px;top:247px;font-size:5.2px;color:#6e6e70;letter-spacing:-.2px">-30 -</span>
<span class="t r " style="right:258.5px;top:292.5px;font-size:5.2px;color:#6e6e70;letter-spacing:-.2px">-40 -</span>
<span class="t r " style="right:258.5px;top:315.3px;font-size:5.2px;color:#6e6e70;letter-spacing:-.2px">-50 -</span>
<div class="a" style="left:825.3px;top:41px;width:4.9px;height:302.5px;background:#2f2f31;border:1px solid #171719"></div>
<div class="a" style="left:830.9px;top:41px;width:4.9px;height:302.5px;background:#2f2f31;border:1px solid #171719"></div>
<svg style="left:821px;top:361.3px;" width="8" height="6" viewBox="0 0 8 6"><path d="M0 .5h8M0 3h8M0 5.5h8" stroke="#8a8a8c" stroke-width=".9"/></svg>
<span class="t b" style="left:822px;width:80px;text-align:center;top:55.7px;font-size:6.3px;color:#f0f0f0;letter-spacing:-.3px">ビデオ</span>
<span class="t " style="left:859px;width:80px;text-align:center;top:55.7px;font-size:6.3px;color:#5c5c5e;letter-spacing:-.3px">オーディオ</span>
<span class="t " style="left:897.5px;width:80px;text-align:center;top:55.7px;font-size:6.3px;color:#5c5c5e;letter-spacing:-.3px">エフェクト</span>
<span class="t " style="left:942.5px;width:80px;text-align:center;top:55.7px;font-size:6.3px;color:#5c5c5e;letter-spacing:-.3px">トランジション</span>
<span class="t " style="left:986px;width:80px;text-align:center;top:55.7px;font-size:6.3px;color:#5c5c5e;letter-spacing:-.3px">イメージ</span>
<span class="t b" style="left:1022px;width:80px;text-align:center;top:55.7px;font-size:6.3px;color:#cdcdcf;letter-spacing:-.3px">ファイル</span>
<div class="a" style="left:844px;top:65px;width:35.5px;height:1.6px;background:#e64b3d;"></div>
<div class="hs" style="left:844px;top:66.6px;width:236px;background:#1b1b1d"></div>
<svg style="left:856px;top:43px;" width="12.5" height="10.5" viewBox="0 0 12.5 10.5"><rect x=".6" y=".6" width="11.3" height="9.3" rx="1" fill="none" stroke="#ececec" stroke-width="1.1"/><path d="M2.3 2.3v5.9M10.2 2.3v5.9" stroke="#ececec" stroke-width=".9" stroke-dasharray="1.1 .9"/><rect x="3.6" y="2.6" width="5.3" height="5.3" fill="none" stroke="#ececec" stroke-width=".5"/></svg>
<svg style="left:894.5px;top:43.5px;" width="9" height="10" viewBox="0 0 9 10"><path d="M3 8V1.8l5-1.3v6.3" fill="none" stroke="#565658" stroke-width=".9"/><ellipse cx="1.8" cy="8.2" rx="1.6" ry="1.2" fill="#565658"/><ellipse cx="6.8" cy="7" rx="1.6" ry="1.2" fill="#565658"/></svg>
<svg style="left:932.5px;top:43px;" width="10" height="11" viewBox="0 0 10 11"><path d="M1 10l5.5-6" stroke="#565658" stroke-width="1.5" stroke-linecap="round"/><path d="M7.5 1v2M6.5 2h2M9 4.5v1.6M8.2 5.3h1.6M4 1.5v1.4M3.3 2.2h1.4" stroke="#565658" stroke-width=".7"/></svg>
<svg style="left:977px;top:43.5px;" width="11.5" height="9.5" viewBox="0 0 11.5 9.5"><rect x=".5" y=".5" width="10.5" height="8.5" rx=".8" fill="none" stroke="#48484a" stroke-width=".9"/><path d="M1.8 1.6h7.9L5.75 4.7zM1.8 7.9h7.9L5.75 4.7z" fill="#404042"/></svg>
<svg style="left:1020.5px;top:43.5px;" width="11.5" height="9.5" viewBox="0 0 11.5 9.5"><rect x=".5" y=".5" width="10.5" height="8.5" rx=".8" fill="none" stroke="#4a4a4c" stroke-width=".9"/><path d="M2 7l2.2-2.5 1.8 1.5 1.5-1 2 2z" fill="#4a4a4c"/></svg>
<svg style="left:1055.5px;top:43px;" width="13" height="10.5" viewBox="0 0 13 10.5"><rect x="4.5" y="3.5" width="6" height="5.5" rx=".6" fill="#3a3a3c" stroke="#7a7a7c" stroke-width=".9"/><path d="M10.5 5l2.2-1.2v4.8l-2.2-1.2z" fill="none" stroke="#7a7a7c" stroke-width=".8"/><path d="M.8 3h3v6.5h-3z" fill="#5a5a5c"/><path d="M1.5 4v4.5M3 4v4.5" stroke="#2a2a2c" stroke-width=".5"/><circle cx="5.8" cy="2" r="1.4" fill="#5a5a5c"/><circle cx="9" cy="2" r="1.4" fill="#5a5a5c"/></svg>
<div class="tg on" style="left:852px;top:71.5px"><b></b></div>
<span class="t w b" style="left:871.5px;top:70.7px;font-size:6.5px;letter-spacing:-.3px">変形</span>
<div class="dm" style="left:1045.7px;top:73.7px"></div>
<svg style="left:1060.3px;top:71.1px;" width="8.8" height="8.8" viewBox="0 0 8.8 8.8"><path d="M1.8 2.3A3.4 3.4 0 1 1 1 4.6" fill="none" stroke="#9c9c9e" stroke-width=".85"/><path d="M.3 1.2l1.7 1.6 1.3-2" fill="none" stroke="#9c9c9e" stroke-width=".8"/><circle cx="4.4" cy="4.4" r=".8" fill="#9c9c9e"/></svg>
<span class="t r m" style="right:163px;top:87.5px;font-size:6.3px;color:#c6c6c8;letter-spacing:-.3px">ズーム</span>
<span class="t m" style="left:923px;top:87.9px;font-size:7px;color:#c6c6c8;">X</span>
<div class="fld" style="left:932px;top:86.8px;width:30.5px">1.080</div>
<span class="t m" style="left:992.5px;top:87.9px;font-size:7px;color:#c6c6c8;">Y</span>
<div class="fld" style="left:1001.3px;top:86.8px;width:30.5px">1.080</div>
<div class="dm" style="left:1045.7px;top:90.7px"></div>
<svg style="left:1060.3px;top:88.1px;" width="8.8" height="8.8" viewBox="0 0 8.8 8.8"><path d="M1.8 2.3A3.4 3.4 0 1 1 1 4.6" fill="none" stroke="#828284" stroke-width=".85"/><path d="M.3 1.2l1.7 1.6 1.3-2" fill="none" stroke="#828284" stroke-width=".8"/></svg>
<svg style="left:976px;top:88.5px;" width="8" height="8" viewBox="0 0 8 8"><path d="M3.2 4.8l1.6-1.6" stroke="#e4e4e4" stroke-width="1.1"/><rect x=".5" y="3.6" width="3.9" height="2.8" rx="1.4" transform="rotate(-45 2.45 5)" fill="none" stroke="#e4e4e4" stroke-width="1.15"/><rect x="3.6" y="1.6" width="3.9" height="2.8" rx="1.4" transform="rotate(-45 5.55 3)" fill="none" stroke="#e4e4e4" stroke-width="1.15"/></svg>
<span class="t r m" style="right:163px;top:101.7px;font-size:6.3px;color:#c6c6c8;letter-spacing:-.3px">位置</span>
<span class="t m" style="left:923px;top:102.1px;font-size:7px;color:#c6c6c8;">X</span>
<div class="fld" style="left:932px;top:101px;width:30.5px">0.000</div>
<span class="t m" style="left:992.5px;top:102.1px;font-size:7px;color:#c6c6c8;">Y</span>
<div class="fld" style="left:1001.3px;top:101px;width:30.5px">0.000</div>
<div class="dm" style="left:1045.7px;top:104.9px"></div>
<svg style="left:1060.3px;top:102.3px;" width="8.8" height="8.8" viewBox="0 0 8.8 8.8"><path d="M1.8 2.3A3.4 3.4 0 1 1 1 4.6" fill="none" stroke="#828284" stroke-width=".85"/><path d="M.3 1.2l1.7 1.6 1.3-2" fill="none" stroke="#828284" stroke-width=".8"/></svg>
<span class="t r m" style="right:163px;top:115.7px;font-size:6.3px;color:#c6c6c8;letter-spacing:-.3px">回転の角度</span>
<div class="sl" style="left:922.5px;top:120.1px;width:75px"></div>
<div class="kn" style="left:948.3px;top:118.2px"></div>
<div class="fld" style="left:1001.3px;top:115px;width:30.5px">-90.000</div>
<div class="dm" style="left:1045.7px;top:118.9px"></div>
<svg style="left:1060.3px;top:116.3px;" width="8.8" height="8.8" viewBox="0 0 8.8 8.8"><path d="M1.8 2.3A3.4 3.4 0 1 1 1 4.6" fill="none" stroke="#828284" stroke-width=".85"/><path d="M.3 1.2l1.7 1.6 1.3-2" fill="none" stroke="#828284" stroke-width=".8"/></svg>
<span class="t r m" style="right:163px;top:129.8px;font-size:6.3px;color:#c6c6c8;letter-spacing:-.3px">アンカーポイント</span>
<span class="t m" style="left:923px;top:130.2px;font-size:7px;color:#c6c6c8;">X</span>
<div class="fld" style="left:932px;top:129.1px;width:30.5px">0.000</div>
<span class="t m" style="left:992.5px;top:130.2px;font-size:7px;color:#c6c6c8;">Y</span>
<div class="fld" style="left:1001.3px;top:129.1px;width:30.5px">0.000</div>
<div class="dm" style="left:1045.7px;top:133px"></div>
<svg style="left:1060.3px;top:130.4px;" width="8.8" height="8.8" viewBox="0 0 8.8 8.8"><path d="M1.8 2.3A3.4 3.4 0 1 1 1 4.6" fill="none" stroke="#828284" stroke-width=".85"/><path d="M.3 1.2l1.7 1.6 1.3-2" fill="none" stroke="#828284" stroke-width=".8"/></svg>
<span class="t r m" style="right:163px;top:144px;font-size:6.3px;color:#c6c6c8;letter-spacing:-.3px">ピッチ</span>
<div class="sl" style="left:922.5px;top:148.4px;width:75px"></div>
<div class="kn" style="left:957.8px;top:146.5px"></div>
<div class="fld" style="left:1001.3px;top:143.3px;width:30.5px">0.000</div>
<div class="dm" style="left:1045.7px;top:147.2px"></div>
<svg style="left:1060.3px;top:144.6px;" width="8.8" height="8.8" viewBox="0 0 8.8 8.8"><path d="M1.8 2.3A3.4 3.4 0 1 1 1 4.6" fill="none" stroke="#828284" stroke-width=".85"/><path d="M.3 1.2l1.7 1.6 1.3-2" fill="none" stroke="#828284" stroke-width=".8"/></svg>
<span class="t r m" style="right:163px;top:158px;font-size:6.3px;color:#c6c6c8;letter-spacing:-.3px">ヨー</span>
<div class="sl" style="left:922.5px;top:162.4px;width:75px"></div>
<div class="kn" style="left:957.8px;top:160.5px"></div>
<div class="fld" style="left:1001.3px;top:157.3px;width:30.5px">0.000</div>
<div class="dm" style="left:1045.7px;top:161.2px"></div>
<svg style="left:1060.3px;top:158.6px;" width="8.8" height="8.8" viewBox="0 0 8.8 8.8"><path d="M1.8 2.3A3.4 3.4 0 1 1 1 4.6" fill="none" stroke="#828284" stroke-width=".85"/><path d="M.3 1.2l1.7 1.6 1.3-2" fill="none" stroke="#828284" stroke-width=".8"/></svg>
<span class="t r m" style="right:163px;top:172.3px;font-size:6.3px;color:#c6c6c8;letter-spacing:-.3px">反転</span>
<svg style="left:1060.3px;top:172.9px;" width="8.8" height="8.8" viewBox="0 0 8.8 8.8"><path d="M1.8 2.3A3.4 3.4 0 1 1 1 4.6" fill="none" stroke="#828284" stroke-width=".85"/><path d="M.3 1.2l1.7 1.6 1.3-2" fill="none" stroke="#828284" stroke-width=".8"/></svg>
<svg style="left:924.5px;top:171.8px;" width="12.5" height="12" viewBox="0 0 12.5 12"><rect x=".5" y=".5" width="11.5" height="11" rx="1.5" fill="#242426" stroke="#565658" stroke-width=".8"/><path d="M6.25 2.5v7" stroke="#c8c8ca" stroke-width=".7"/><path d="M2.5 4.5l2 1.5-2 1.5zM10 4.5l-2 1.5 2 1.5z" fill="#c8c8ca"/></svg>
<svg style="left:946.3px;top:171.8px;" width="12.5" height="12" viewBox="0 0 12.5 12"><rect x=".5" y=".5" width="11.5" height="11" rx="1.5" fill="#242426" stroke="#565658" stroke-width=".8"/><path d="M3 6h6.5" stroke="#c8c8ca" stroke-width=".7"/><path d="M4.75 2.5l1.5 2 1.5-2zM4.75 9.5l1.5-2 1.5 2z" fill="#c8c8ca"/></svg>
<div class="il" style="left:850px;width:223.5px;top:188.2px"></div>
<svg style="left:853.5px;top:194px;" width="4" height="6" viewBox="0 0 4 6"><path d="M.6 .6l2.6 2.4-2.6 2.4" fill="none" stroke="#8a8a8c" stroke-width=".9"/></svg>
<span class="t m" style="left:863px;top:192.2px;font-size:6.6px;color:#c2c2c4;letter-spacing:-.35px">AIスマートリフレーム</span>
<div class="il" style="top:205.7px"></div>
<div class="tg on" style="left:852px;top:211px"><b></b></div>
<span class="t w b" style="left:871.5px;top:210.2px;font-size:6.5px;letter-spacing:-.3px">クロップ</span>
<div class="dm" style="left:1045.7px;top:213.2px"></div>
<svg style="left:1060.3px;top:210.6px;" width="8.8" height="8.8" viewBox="0 0 8.8 8.8"><path d="M1.8 2.3A3.4 3.4 0 1 1 1 4.6" fill="none" stroke="#9c9c9e" stroke-width=".85"/><path d="M.3 1.2l1.7 1.6 1.3-2" fill="none" stroke="#9c9c9e" stroke-width=".8"/><circle cx="4.4" cy="4.4" r=".8" fill="#9c9c9e"/></svg>
<div class="il" style="top:223px"></div>
<div class="tg off" style="left:852px;top:228.5px"><b></b></div>
<span class="t w b" style="left:871.5px;top:227.7px;font-size:6.5px;letter-spacing:-.3px">ダイナミックズーム</span>
<svg style="left:1060.3px;top:228.1px;" width="8.8" height="8.8" viewBox="0 0 8.8 8.8"><path d="M1.8 2.3A3.4 3.4 0 1 1 1 4.6" fill="none" stroke="#3c3c3e" stroke-width=".85"/><path d="M.3 1.2l1.7 1.6 1.3-2" fill="none" stroke="#3c3c3e" stroke-width=".8"/><circle cx="4.4" cy="4.4" r=".8" fill="#3c3c3e"/></svg>
<div class="il" style="top:240.5px"></div>
<div class="tg on" style="left:852px;top:246px"><b></b></div>
<span class="t w b" style="left:871.5px;top:245.2px;font-size:6.5px;letter-spacing:-.3px">合成</span>
<div class="dm" style="left:1045.7px;top:248.2px"></div>
<svg style="left:1060.3px;top:245.6px;" width="8.8" height="8.8" viewBox="0 0 8.8 8.8"><path d="M1.8 2.3A3.4 3.4 0 1 1 1 4.6" fill="none" stroke="#9c9c9e" stroke-width=".85"/><path d="M.3 1.2l1.7 1.6 1.3-2" fill="none" stroke="#9c9c9e" stroke-width=".8"/><circle cx="4.4" cy="4.4" r=".8" fill="#9c9c9e"/></svg>
<span class="t r m" style="right:163px;top:262px;font-size:6.3px;color:#c6c6c8;letter-spacing:-.3px">合成モード</span>
<svg style="left:1060.3px;top:262.6px;" width="8.8" height="8.8" viewBox="0 0 8.8 8.8"><path d="M1.8 2.3A3.4 3.4 0 1 1 1 4.6" fill="none" stroke="#828284" stroke-width=".85"/><path d="M.3 1.2l1.7 1.6 1.3-2" fill="none" stroke="#828284" stroke-width=".8"/></svg>
<div class="a" style="left:922.5px;top:261.3px;width:109.3px;height:11.4px;background:#1b1b1d;border:1px solid #141416;border-radius:2px"></div>
<span class="t " style="left:929px;top:262.2px;font-size:6.3px;color:#d8d8da;">通常</span>
<svg style="left:1018.5px;top:265.7px;" width="5.5" height="3.5" viewBox="0 0 5.5 3.5"><path d="M.5 .5l2.25 2.3 2.25-2.3" fill="none" stroke="#a0a0a2" stroke-width=".9"/></svg>
<span class="t r m" style="right:163px;top:276px;font-size:6.3px;color:#c6c6c8;letter-spacing:-.3px">不透明度</span>
<div class="sl" style="left:922.5px;top:280.4px;width:75px"></div>
<div class="kn" style="left:994.3px;top:278.5px"></div>
<div class="fld" style="left:1001.3px;top:275.3px;width:30.5px">100.00</div>
<div class="dm" style="left:1045.7px;top:279.2px"></div>
<svg style="left:1060.3px;top:276.6px;" width="8.8" height="8.8" viewBox="0 0 8.8 8.8"><path d="M1.8 2.3A3.4 3.4 0 1 1 1 4.6" fill="none" stroke="#828284" stroke-width=".85"/><path d="M.3 1.2l1.7 1.6 1.3-2" fill="none" stroke="#828284" stroke-width=".8"/></svg>
<div class="il" style="top:291.5px"></div>
<div class="tg" style="left:852px;top:296.8px;background:#232325"></div>
<svg style="left:859.5px;top:298.3px;" width="5" height="5" viewBox="0 0 5 5"><circle cx="2.5" cy="2.5" r="1.6" fill="none" stroke="#c8432f" stroke-width="1"/></svg>
<span class="t w b" style="left:871.5px;top:296px;font-size:6.5px;letter-spacing:-.3px">速度変更</span>
<svg style="left:1060.3px;top:296.40000000000003px;" width="8.8" height="8.8" viewBox="0 0 8.8 8.8"><path d="M1.8 2.3A3.4 3.4 0 1 1 1 4.6" fill="none" stroke="#3c3c3e" stroke-width=".85"/><path d="M.3 1.2l1.7 1.6 1.3-2" fill="none" stroke="#3c3c3e" stroke-width=".8"/><circle cx="4.4" cy="4.4" r=".8" fill="#3c3c3e"/></svg>
<div class="il" style="top:308.6px"></div>
<div class="tg on" style="left:852px;top:314px"><b></b></div>
<span class="t w b" style="left:871.5px;top:313.2px;font-size:6.5px;letter-spacing:-.3px">スタビライゼーション</span>
<svg style="left:1060.3px;top:313.6px;" width="8.8" height="8.8" viewBox="0 0 8.8 8.8"><path d="M1.8 2.3A3.4 3.4 0 1 1 1 4.6" fill="none" stroke="#9c9c9e" stroke-width=".85"/><path d="M.3 1.2l1.7 1.6 1.3-2" fill="none" stroke="#9c9c9e" stroke-width=".8"/><circle cx="4.4" cy="4.4" r=".8" fill="#9c9c9e"/></svg>
<div class="il" style="top:326px"></div>
<div class="tg on" style="left:852px;top:331.5px"><b></b></div>
<span class="t w b" style="left:871.5px;top:330.7px;font-size:6.5px;letter-spacing:-.3px">レンズ補正</span>
<div class="dm" style="left:1045.7px;top:333.7px"></div>
<svg style="left:1060.3px;top:331.1px;" width="8.8" height="8.8" viewBox="0 0 8.8 8.8"><path d="M1.8 2.3A3.4 3.4 0 1 1 1 4.6" fill="none" stroke="#9c9c9e" stroke-width=".85"/><path d="M.3 1.2l1.7 1.6 1.3-2" fill="none" stroke="#9c9c9e" stroke-width=".8"/><circle cx="4.4" cy="4.4" r=".8" fill="#9c9c9e"/></svg>
<div class="il" style="top:343.5px"></div>
<div class="tg on" style="left:852px;top:348.8px"><b></b></div>
<span class="t w b" style="left:871.5px;top:348px;font-size:6.5px;letter-spacing:-.3px">リタイム＆スケーリング</span>
<svg style="left:1060.3px;top:348.40000000000003px;" width="8.8" height="8.8" viewBox="0 0 8.8 8.8"><path d="M1.8 2.3A3.4 3.4 0 1 1 1 4.6" fill="none" stroke="#9c9c9e" stroke-width=".85"/><path d="M.3 1.2l1.7 1.6 1.3-2" fill="none" stroke="#9c9c9e" stroke-width=".8"/><circle cx="4.4" cy="4.4" r=".8" fill="#9c9c9e"/></svg>
<div class="il" style="top:361px"></div>
<div class="tg off" style="left:852px;top:366.3px"><b></b></div>
<span class="t w" style="left:871.5px;top:365.5px;font-size:7.1px;letter-spacing:-.2px">AI Super Scale</span>
<svg style="left:1060.3px;top:365.90000000000003px;" width="8.8" height="8.8" viewBox="0 0 8.8 8.8"><path d="M1.8 2.3A3.4 3.4 0 1 1 1 4.6" fill="none" stroke="#9c9c9e" stroke-width=".85"/><path d="M.3 1.2l1.7 1.6 1.3-2" fill="none" stroke="#9c9c9e" stroke-width=".8"/><circle cx="4.4" cy="4.4" r=".8" fill="#9c9c9e"/></svg>
<div class="il" style="top:378.3px"></div>
<svg style="left:10px;top:356.8px;" width="12" height="12" viewBox="0 0 12 12"><rect x=".5" y="4" width="7.5" height="5" rx="1" fill="none" stroke="#8a8a8c" stroke-width=".9"/><path d="M6 1.2c2 0 3 .8 3 2.3M7.8 2.3l1.3 1.5 1.2-1.5" fill="none" stroke="#8a8a8c" stroke-width=".8"/><path d="M7.8 10.5v-3.5l2.5-.6v3.3" fill="none" stroke="#8a8a8c" stroke-width=".8"/><circle cx="7" cy="10.6" r=".9" fill="#8a8a8c"/><circle cx="9.6" cy="9.9" r=".9" fill="#8a8a8c"/></svg>
<svg style="left:26.5px;top:362px;" width="5.5" height="3.5" viewBox="0 0 5.5 3.5"><path d="M.5 .5l2.25 2.3 2.25-2.3" fill="none" stroke="#9a9a9c" stroke-width=".9"/></svg>
<svg style="left:94px;top:358.5px;" width="12" height="9.5" viewBox="0 0 12 9.5"><rect x=".4" y=".4" width="5" height="8.7" fill="none" stroke="#48484a" stroke-width=".8" stroke-dasharray="1 .7"/><rect x="6" y=".4" width="5.5" height="8.7" rx=".6" fill="#48484a"/><path d="M8.8 2.5v4.5" stroke="#28282a" stroke-width=".9"/></svg>
<svg style="left:116.7px;top:358.5px;" width="13.5" height="9.5" viewBox="0 0 13.5 9.5"><rect x=".4" y=".4" width="12.7" height="8.7" fill="none" stroke="#48484a" stroke-width=".8" stroke-dasharray="1 .7"/><rect x="2.5" y=".4" width="8.5" height="8.7" fill="#48484a"/><path d="M3.5 1.5l6.5 6.5M10 1.5l-6.5 6.5" stroke="#28282a" stroke-width=".9"/></svg>
<svg style="left:140.8px;top:358.5px;" width="12" height="9.5" viewBox="0 0 12 9.5"><rect x="6.5" y=".4" width="5" height="8.7" fill="none" stroke="#48484a" stroke-width=".8" stroke-dasharray="1 .7"/><rect x=".4" y=".4" width="5.5" height="8.7" rx=".6" fill="#48484a"/><path d="M3.2 2.5v4.5" stroke="#28282a" stroke-width=".9"/></svg>
<svg style="left:190.8px;top:358.5px;" width="16" height="9.5" viewBox="0 0 16 9.5"><rect x="2.5" y="1" width="11" height="7.5" fill="#3a3a3c"/><path d="M0 2.5h16M0 4.7h16M0 7h16" stroke="#48484a" stroke-width=".6"/><path d="M8 0v9.5" stroke="#48484a" stroke-width=".9"/></svg>
<svg style="left:215.3px;top:358.5px;" width="14.5" height="9.5" viewBox="0 0 14.5 9.5"><path d="M0 .5h14.5M0 9h14.5" stroke="#5c5c5e" stroke-width=".7"/><rect x="2.5" y="1.3" width="9.5" height="7" fill="none" stroke="#6a6a6c" stroke-width=".9"/><path d="M4 7.5l2-3 1.5 1.5 1-1 2 2.5z" fill="#6a6a6c"/></svg>
<svg style="left:233.3px;top:362px;" width="5.5" height="3.5" viewBox="0 0 5.5 3.5"><path d="M.5 .5l2.25 2.3 2.25-2.3" fill="none" stroke="#9a9a9c" stroke-width=".9"/></svg>
<svg style="left:258.7px;top:358.5px;" width="12.5" height="10" viewBox="0 0 12.5 10"><path d="M0 1.5h12.5M0 5h12.5M0 8.5h12.5" stroke="#9a9a9c" stroke-width=".8"/><circle cx="8" cy="1.5" r="1.15" fill="#b4b4b6"/><circle cx="3.5" cy="5" r="1.15" fill="#b4b4b6"/><circle cx="6.5" cy="8.5" r="1.15" fill="#b4b4b6"/></svg>
<svg style="left:285px;top:358px;" width="11" height="11" viewBox="0 0 11 11"><rect x="2" y=".5" width="3.4" height="6.5" rx="1.7" fill="#7c7c7e"/><path d="M.5 5c0 2 1.3 3.2 3.2 3.2s3.2-1.2 3.2-3.2M3.7 8.2v2M2 10.4h3.4" fill="none" stroke="#7c7c7e" stroke-width=".8"/><path d="M7.5 3h3M9 1.5v3" stroke="#6a6a6c" stroke-width=".7"/></svg>
<svg style="left:308px;top:358px;" width="15" height="11" viewBox="0 0 15 11"><rect x=".5" y="1.5" width="10" height="6.5" rx="1" fill="none" stroke="#6c6c6e" stroke-width=".8"/><rect x="4" y="4" width="10" height="5.5" rx="1" fill="#28282a" stroke="#8a8a8c" stroke-width=".8"/><path d="M8 1c1.5-1 3-.5 3.5.8M6 10.5c-1.5 1-3 .3-3.5-.8" fill="none" stroke="#6c6c6e" stroke-width=".6"/></svg><span class="t b" style="left:313.3px;top:359.8px;font-size:6px;color:#9a9a9c;font-size:6px;transform:scale(.72);transform-origin:0 50%">POI</span>
<svg style="left:334px;top:358px;" width="14" height="11" viewBox="0 0 14 11"><path d="M0 .8h12" stroke="#5c5c5e" stroke-width=".6"/><rect x=".8" y="2.3" width="10.5" height="6" rx="1" fill="#28282a" stroke="#7a7a7c" stroke-width=".8"/><path d="M11.5 7.5v3.5M9.8 9.2h3.5" stroke="#9a9a9c" stroke-width="1"/></svg><span class="t b" style="left:336.8px;top:358.3px;font-size:6px;color:#8a8a8c;font-size:6px;transform:scale(.72);transform-origin:0 50%">POI</span>
<svg style="left:359.3px;top:358.3px;" width="15" height="11" viewBox="0 0 15 11"><rect x=".4" y=".8" width="9.5" height="5" fill="none" stroke="#5c5c5e" stroke-width=".7"/><path d="M2.4 .8v5M4.8 .8v5M7.2 .8v5" stroke="#5c5c5e" stroke-width=".6"/><path d="M8 3.3l6.8 3.8-6.8 3.8z" fill="#a2a2a4"/></svg>
<svg style="left:385px;top:360.6px;" width="4" height="6.5" viewBox="0 0 4 6.5"><path d="M3.3 .5L.7 3.25 3.3 6" fill="none" stroke="#a2a2a4" stroke-width=".9"/></svg>
<svg style="left:395px;top:361px;" width="5.6" height="5.6" viewBox="0 0 5.6 5.6"><circle cx="2.8" cy="2.8" r="2.8" fill="#a2a2a4"/></svg>
<svg style="left:407px;top:360.6px;" width="4" height="6.5" viewBox="0 0 4 6.5"><path d="M.7 .5L3.3 3.25 .7 6" fill="none" stroke="#a2a2a4" stroke-width=".9"/></svg>
<svg style="left:450.7px;top:359.3px;" width="15" height="9" viewBox="0 0 15 9"><path d="M.6 0v9" stroke="#a2a2a4" stroke-width="1.3"/><path d="M8 0v9L1.5 4.5zM15 0v9L8.3 4.5z" fill="#a2a2a4"/></svg>
<svg style="left:477.2px;top:359.3px;" width="8.5" height="9" viewBox="0 0 8.5 9"><path d="M8.5 0v9L0 4.5z" fill="#a2a2a4"/></svg>
<svg style="left:497.7px;top:359.3px;" width="9" height="9" viewBox="0 0 9 9"><rect width="9" height="9" fill="#a2a2a4"/></svg>
<svg style="left:518.6px;top:359.3px;" width="8.5" height="9" viewBox="0 0 8.5 9"><path d="M0 0v9l8.5-4.5z" fill="#a2a2a4"/></svg>
<svg style="left:538px;top:359.3px;" width="15" height="9" viewBox="0 0 15 9"><path d="M14.4 0v9" stroke="#a2a2a4" stroke-width="1.3"/><path d="M7 0v9l6.5-4.5zM0 0v9l6.7-4.5z" fill="#a2a2a4"/></svg>
<svg style="left:563.4px;top:358.5px;" width="14.5" height="10.5" viewBox="0 0 14.5 10.5"><path d="M10 2.8h1a3 3 0 0 1 0 6h-7.5a3 3 0 0 1 0-6h3" fill="none" stroke="#a2a2a4" stroke-width="1.1"/><path d="M5.5 .3l2.8 2.5-2.8 2.5" fill="none" stroke="#a2a2a4" stroke-width="1.1"/></svg>
<svg style="left:649.5px;top:359.5px;" width="7.5" height="8.5" viewBox="0 0 7.5 8.5"><path d="M0 0v8.5l6-4.25z" fill="#a2a2a4"/><path d="M6.9 0v8.5" stroke="#a2a2a4" stroke-width="1.2"/></svg>
<svg style="left:671.8px;top:359.5px;" width="7.5" height="8.5" viewBox="0 0 7.5 8.5"><path d="M7.5 0v8.5l-6-4.25z" fill="#a2a2a4"/><path d="M.6 0v8.5" stroke="#a2a2a4" stroke-width="1.2"/></svg>
<span class="t r w b" style="right:284.5px;top:359.2px;font-size:9.8px;letter-spacing:-.55px">01:00:00:00</span>
<div class="a" style="left:130.8px;top:375.3px;width:8.4px;height:51.3px;background:#232325;"></div>
<svg style="left:139.2px;top:375.6px;overflow:hidden" width="461" height="2.6" viewBox="0 0 461 2.6"><path d="M0 1.3H461" stroke="#3b3b3d" stroke-width="2.6" stroke-dasharray="1 2.838" stroke-dashoffset=".5"/></svg>
<svg style="left:139.2px;top:375.6px;overflow:hidden" width="704" height="2.6" viewBox="0 0 704 2.6"><path d="M464.4 1.3H704" stroke="#323234" stroke-width="2.6" stroke-dasharray="1 2.838" stroke-dashoffset=".5"/></svg>
<div class="a" style="left:253.7px;top:375.6px;width:1px;height:4.5px;background:#4a4a4c;"></div>
<div class="a" style="left:369px;top:375.6px;width:1px;height:9px;background:#4a4a4c;"></div>
<div class="a" style="left:484.1px;top:375.6px;width:1px;height:4.5px;background:#4a4a4c;"></div>
<div class="a" style="left:600px;top:375.6px;width:1px;height:9px;background:#4a4a4c;"></div>
<div class="a" style="left:714.5px;top:375.6px;width:1px;height:4.5px;background:#4a4a4c;"></div>
<div class="a" style="left:830.5px;top:375.6px;width:1px;height:9px;background:#4a4a4c;"></div>
<span class="t " style="left:142.5px;top:377.6px;font-size:6.4px;color:#c4c4c6;letter-spacing:-.15px">01:00:00:00</span>
<span class="t " style="left:373px;top:377.6px;font-size:6.4px;color:#c4c4c6;letter-spacing:-.15px">01:00:02:12</span>
<span class="t " style="left:603.8px;top:377.6px;font-size:6.4px;color:#4e4e50;letter-spacing:-.15px">01:00:05:00</span>
<div class="a" style="left:834px;top:377.6px;width:9px;height:10px;overflow:hidden"><span class="t " style="left:0px;top:0px;font-size:6.4px;color:#4e4e50;">01:00</span></div>
<div class="a" style="left:140.3px;top:402px;width:459.7px;height:10.3px;background:#4a84b8;border-radius:0 1.5px 1.5px 0"></div>
<div class="a" style="left:140.3px;top:401.3px;width:459.7px;height:0.8px;background:#1e1e20;"></div>
<div class="a" style="left:140.3px;top:412.2px;width:459.7px;height:0.8px;background:#1e1e20;"></div>
<div class="a" style="left:115px;top:401.3px;width:14.5px;height:12px;background:#303032;border-radius:1px"></div>
<span class="t " style="left:115.3px;width:14px;text-align:center;top:401.8px;font-size:5.3px;color:#d0452f;">V1</span>
<div class="a" style="left:138.7px;top:377px;width:1.2px;height:50px;background:#e64b3d;"></div>
<svg style="left:135px;top:376.8px;" width="8.6" height="6.5" viewBox="0 0 8.6 6.5"><path d="M0 0h8.6v2.5L4.3 6.5 0 2.5z" fill="#e64b3d"/></svg>
<svg style="left:13px;top:397.5px;" width="13.5" height="9" viewBox="0 0 13.5 9"><path d="M0 1h11M0 2.5h11" stroke="#6a6a6c" stroke-width=".7" stroke-dasharray="1.3 .6"/><rect x=".5" y="3.5" width="10" height="3" fill="#545456"/><path d="M8 6.5l1.8 1.8 3-3.3" fill="none" stroke="#9a9a9c" stroke-width=".9"/></svg>
<svg style="left:51px;top:396.5px;" width="12" height="10" viewBox="0 0 12 10"><path d="M3 2h6M1 4h8M3 6h7M2 8h5" stroke="#6a6a6c" stroke-width="1.1"/><path d="M6 0v10" stroke="#8a8a8c" stroke-width=".7"/><path d="M9.5 1l1.5-1M10 2.5h1.8" stroke="#6a6a6c" stroke-width=".6"/></svg>
<svg style="left:86.5px;top:396.5px;" width="13" height="10" viewBox="0 0 13 10"><path d="M1 4v2M2.5 3v4M4 2v6M5.5 1v8M7 2v6M8.5 1.5v7M10 3v4" stroke="#4c4c4e" stroke-width=".9"/><path d="M10.5 1l1.2-1 1 1" fill="none" stroke="#5c5c5e" stroke-width=".6"/></svg>
<svg style="left:133.83px;top:427.8px;overflow:hidden" width="352.67" height="3" viewBox="0 0 352.67 3"><path d="M0 1.5H352.67" stroke="#313133" stroke-width="3" stroke-dasharray="1 2.8333" stroke-dashoffset=".5"/></svg>
<svg style="left:133.83px;top:427.8px;overflow:hidden" width="708.5" height="3" viewBox="0 0 708.5 3"><path d="M356.5 1.5H708.5" stroke="#454547" stroke-width="3" stroke-dasharray="1 2.8333" stroke-dashoffset=".5"/></svg>
<div class="a" style="left:210px;top:427.8px;width:1px;height:5px;background:#38383a;"></div>
<div class="a" style="left:302px;top:427.8px;width:1px;height:11px;background:#38383a;"></div>
<div class="a" style="left:394px;top:427.8px;width:1px;height:5px;background:#38383a;"></div>
<div class="a" style="left:578.5px;top:427.8px;width:1px;height:5px;background:#4c4c4e;"></div>
<div class="a" style="left:670.5px;top:427.8px;width:1px;height:11px;background:#4c4c4e;"></div>
<div class="a" style="left:762.5px;top:427.8px;width:1px;height:5px;background:#4c4c4e;"></div>
<div class="a" style="left:131px;top:432.8px;width:30px;height:10px;overflow:hidden"><span class="t r " style="right:1080px;top:0px;font-size:6.4px;color:#525254;right:7px;letter-spacing:-.15px">00:59:56:00</span></div>
<span class="t " style="left:305.5px;top:432.8px;font-size:6.4px;color:#525254;letter-spacing:-.15px">00:59:58:00</span>
<span class="t " style="left:491px;top:432.8px;font-size:6.4px;color:#bcbcbe;letter-spacing:-.15px">01:00:00:00</span>
<span class="t " style="left:674.5px;top:432.8px;font-size:6.4px;color:#bcbcbe;letter-spacing:-.15px">01:00:02:00</span>
<div class="a" style="left:302px;top:439px;width:0;height:151px;border-left:1px solid #262628"></div>
<div class="a" style="left:670.5px;top:446px;width:0;height:144px;border-left:1px dotted #3a3a3c"></div>
<svg style="left:11px;top:433.5px;" width="14" height="10" viewBox="0 0 14 10"><rect x="1.8" y="1.6" width="10.4" height="6.8" rx=".8" fill="none" stroke="#dcdcdc" stroke-width="1.2"/><path d="M.3 .6l1.5 1M13.7 .6l-1.5 1M.3 9.4l1.5-1M13.7 9.4l-1.5-1" stroke="#dcdcdc" stroke-width=".9"/><path d="M6 3.5l-1.7 1.5 1.7 1.5M8 3.5l1.7 1.5-1.7 1.5" fill="none" stroke="#dcdcdc" stroke-width=".85"/></svg>
<svg style="left:36px;top:433.5px;" width="11.5" height="10" viewBox="0 0 11.5 10"><path d="M2 .5c-1.5 1.5-1.5 7.5 0 9M9.5 .5c1.5 1.5 1.5 7.5 0 9" fill="none" stroke="#5a5a5c" stroke-width=".8"/><path d="M5.75 1.5v7" stroke="#6a6a6c" stroke-width=".8"/><path d="M4 4l-1 1 1 1M7.5 4l1 1-1 1" fill="none" stroke="#5a5a5c" stroke-width=".7"/></svg>
<svg style="left:61.3px;top:434px;" width="8" height="9.5" viewBox="0 0 8 9.5"><path d="M2 0l3.4 6M6 0L2.6 6" stroke="#a4a4a6" stroke-width=".9"/><circle cx="1.7" cy="7.5" r="1.3" fill="none" stroke="#a4a4a6" stroke-width=".8"/><circle cx="6.3" cy="7.5" r="1.3" fill="none" stroke="#a4a4a6" stroke-width=".8"/></svg>
<svg style="left:85.7px;top:434.3px;" width="5.5" height="8" viewBox="0 0 5.5 8"><path d="M0 .8q0-.8.8-.8h3.9q.8 0 .8.8v4.7l-2.75 2.5L0 5.5z" fill="#4a90d9"/></svg>
<svg style="left:106px;top:434.3px;" width="13.5" height="8.5" viewBox="0 0 13.5 8.5"><path d="M3.5 .5L.5 4.25 3.5 8M5.3 .5l-3 3.75 3 3.75" fill="none" stroke="#5a5a5c" stroke-width=".8"/><path d="M8.8 .3l3.9 3.95-3.9 3.95-3.9-3.95z" fill="#77777a"/><path d="M8.8 2l2.2 2.25-2.2 2.25-2.2-2.25z" fill="#8a8a8c"/></svg>
<svg style="left:12.5px;top:541.5px;" width="6.5" height="10" viewBox="0 0 6.5 10"><path d="M3.25 .5v9M1.5 2.5l1.75-2 1.75 2M1.5 7.5l1.75 2 1.75-2" fill="none" stroke="#5a5a5c" stroke-width=".8"/><ellipse cx="3.25" cy="5" rx="2.7" ry="1.3" fill="#2d2d2f" stroke="#5a5a5c" stroke-width=".8"/></svg>
<svg style="left:33px;top:543px;" width="6.5" height="7" viewBox="0 0 6.5 7"><rect x=".3" y="3" width="5.9" height="3.7" rx=".6" fill="#4e4e50"/><path d="M1.6 3v-1a1.65 1.65 0 0 1 3.3 0" fill="none" stroke="#4e4e50" stroke-width=".8"/></svg>
<svg style="left:52px;top:542.5px;" width="8.5" height="8" viewBox="0 0 8.5 8"><path d="M1 7v-2.7a3.25 3.25 0 0 1 6.5 0v2.7" fill="none" stroke="#5a5a5c" stroke-width=".9"/><rect x=".3" y="4.8" width="1.6" height="2.8" rx=".5" fill="#5a5a5c"/><rect x="6.6" y="4.8" width="1.6" height="2.8" rx=".5" fill="#5a5a5c"/></svg>
<svg style="left:72px;top:542.8px;" width="9.5" height="7.5" viewBox="0 0 9.5 7.5"><path d="M.3 2.5h1.9l2.6-2.3v7.1l-2.6-2.3h-1.9z" fill="#ececec"/><path d="M6 2.2c.8.8.8 2.4 0 3.2M7.3 1.1c1.4 1.5 1.4 3.9 0 5.4" fill="none" stroke="#ececec" stroke-width=".8"/></svg>
<svg style="left:92.5px;top:543px;" width="9.5" height="7.2" viewBox="0 0 9.5 7.2"><rect x=".3" y=".3" width="8.9" height="6.6" rx="1" fill="#e8e8e8"/><rect x="2.3" y="1.3" width="4.9" height="4.6" fill="#d0d0d0" stroke="#2d2d2f" stroke-width=".5"/><path d="M1.3 1.2v5M8.2 1.2v5" stroke="#2d2d2f" stroke-width=".7" stroke-dasharray=".9 .8"/></svg>
<span class="t b" style="left:116px;width:14px;text-align:center;top:528px;font-size:5.8px;color:#d9472f;">V1</span>
<span class="t b" style="left:116px;width:14px;text-align:center;top:555.5px;font-size:5.8px;color:#d9472f;">A1</span>
<svg style="left:488.7px;top:518.8px;overflow:hidden" width="354.3" height="56" viewBox="0 0 354.3 56"><defs><linearGradient id="tsky" x1="0" y1="0" x2="1" y2="0"><stop offset="0" stop-color="#abbcdd"/><stop offset=".35" stop-color="#bfcce5"/><stop offset=".62" stop-color="#dde1ea"/><stop offset=".78" stop-color="#efeae3"/><stop offset=".92" stop-color="#f0dfcd"/><stop offset="1" stop-color="#d5c5ba"/></linearGradient><linearGradient id="tskv" x1="0" y1="0" x2="0" y2="1"><stop offset="0" stop-color="#fff" stop-opacity=".16"/><stop offset=".5" stop-color="#fff" stop-opacity=".06"/><stop offset="1" stop-color="#fff" stop-opacity="0"/></linearGradient><filter id="tn1" x="0" y="0" width="100%" height="100%"><feTurbulence type="fractalNoise" baseFrequency=".5 .08" numOctaves="2" seed="4"/><feColorMatrix type="matrix" values="0 0 0 0 .8  0 0 0 0 .8  0 0 0 0 .8  1.3 0 0 0 -.56"/></filter><filter id="tn2" x="0" y="0" width="100%" height="100%"><feTurbulence type="fractalNoise" baseFrequency=".8 .12" numOctaves="2" seed="11"/><feColorMatrix type="matrix" values="0 0 0 0 0  0 0 0 0 0  0 0 0 0 0  1 0 0 0 -.38"/></filter><symbol id="th" viewBox="0 0 69.3 52" preserveAspectRatio="none"><rect width="35" height="52" fill="url(#tsky)"/><rect width="35" height="52" fill="url(#tskv)"/><rect x="34.7" width="9.3" height="52" fill="#5c5e62"/><rect x="34.7" width="9.3" height="52" filter="url(#tn1)"/><rect x="37.3" width="1" height="52" fill="#d8d8d8" opacity=".6"/><rect x="43.3" width="1.7" height="52" fill="#3c3c3e"/><rect x="45" width="18" height="52" fill="#7b7b7b"/><rect x="45" width="18" height="52" filter="url(#tn2)"/><rect x="63" width="6.3" height="52" fill="#050505"/><path d="M46 14h7M46.5 46h9" stroke="#5a5a5a" stroke-width=".7"/><rect x="50.8" y="0" width=".7" height="52" fill="#5e5e5e" opacity=".6"/></symbol></defs><rect width="354.3" height="56" fill="#3b6893"/><use href="#th" x="0" y="2.1" width="69.3" height="52"/><use href="#th" x="69.3" y="2.1" width="69.3" height="52"/><use href="#th" x="138.6" y="2.1" width="69.3" height="52"/><use href="#th" x="207.9" y="2.1" width="69.3" height="52"/><use href="#th" x="277.2" y="2.1" width="69.3" height="52"/><use href="#th" x="346.5" y="2.1" width="69.3" height="52"/></svg>
<div class="a" style="left:842.3px;top:375px;width:1.2px;height:215px;background:#161618;"></div>
<svg style="left:490.3px;top:565.2px;" width="9.5" height="7" viewBox="0 0 9.5 7"><rect x=".5" y=".5" width="8.5" height="6" rx="1.2" fill="#58585a" stroke="#e4e4e4" stroke-width=".9"/><path d="M2.2 4.6h2.3v-2h2.6" fill="none" stroke="#f0f0f0" stroke-width=".8"/></svg>
<svg style="left:661.2px;top:540.7px;" width="13" height="13" viewBox="0 0 11 11"><path d="M3 .5h-1.5q-1 0-1 1v8q0 1 1 1h1.5M8 .5h1.5q1 0 1 1v8q0 1-1 1h-1.5" fill="none" stroke="#f4f4f4" stroke-width="1.1"/><circle cx="4" cy="5.5" r=".8" fill="#f4f4f4"/><circle cx="7" cy="5.5" r=".8" fill="#f4f4f4"/></svg>
<div class="a" style="left:487px;top:430px;width:1.2px;height:160px;background:#e64b3d;"></div>
<svg style="left:483px;top:427.5px;" width="9.2" height="7.5" viewBox="0 0 9.2 7.5"><path d="M0 0h9.2v2.8L4.6 7.5 0 2.8z" fill="#e64b3d"/></svg>
<svg style="left:484.5px;top:437.5px;" width="5" height="4" viewBox="0 0 5 4"><path d="M.5 1.5l2 2 2-3" fill="none" stroke="#8a8a8c" stroke-width=".7"/></svg>
<svg style="left:13.7px;top:593.3px;" width="11.5" height="11" viewBox="0 0 11.5 11"><circle cx="5.75" cy="2.9" r="2.7" fill="#f0f0f0"/><circle cx="2.8" cy="8" r="2.7" fill="#f0f0f0"/><circle cx="8.7" cy="8" r="2.7" fill="#f0f0f0"/></svg>
<span class="t b" style="left:29.5px;top:594.3px;font-size:8px;color:#e6e6e6;letter-spacing:-.25px">DaVinci Resolve Studio 20</span>
<svg style="left:333px;top:594.3px;" width="10.5" height="9" viewBox="0 0 10.5 9"><rect x=".5" y=".5" width="9.5" height="8" rx=".8" fill="none" stroke="#7e7e80" stroke-width=".9"/><path d="M2 7l2-2.5 1.6 1.4 1.3-.9 1.8 2z" fill="#7e7e80"/></svg>
<svg style="left:400px;top:594px;" width="13" height="9.5" viewBox="0 0 13 9.5"><path d="M0 3h4M.5 5h3.5M1 7h3" stroke="#4a90d9" stroke-width=".8"/><path d="M5 1.5h2.5l-1.5 6.5h-2.5zM8.5 1.5h2.5q1.5 0 1.2 1.5l-.8 3.5q-.3 1.5-1.8 1.5h-2.5z" fill="none" stroke="#4a90d9" stroke-width=".9"/><path d="M8.8 0L5.8 9.5" stroke="#e64b3d" stroke-width="1"/></svg>
<svg style="left:467px;top:594.3px;" width="12.5" height="9" viewBox="0 0 12.5 9"><path d="M0 2.5h5M7.5 2.5h5M1.5 4.5h3.5M7.5 4.5h3.5M0 6.5h5M7.5 6.5h5" stroke="#7e7e80" stroke-width="1"/><path d="M6.25 0v9" stroke="#a0a0a2" stroke-width=".9"/></svg>
<svg style="left:536px;top:594px;" width="10" height="10" viewBox="0 0 10 10"><path d="M1 9l5.5-6" stroke="#7e7e80" stroke-width="1.6" stroke-linecap="round"/><path d="M5 2l3 3 1.5-4.5z" fill="#7e7e80"/><path d="M2 1.5v1.5M1.3 2.2h1.4" stroke="#7e7e80" stroke-width=".6"/></svg>
<svg style="left:602.5px;top:594px;" width="10" height="10" viewBox="0 0 10 10"><circle cx="8.8" cy="5" r=".8" fill="#7e7e80"/><circle cx="7.69" cy="7.69" r=".8" fill="#7e7e80"/><circle cx="5" cy="8.8" r=".8" fill="#7e7e80"/><circle cx="2.31" cy="7.69" r=".8" fill="#7e7e80"/><circle cx="1.2" cy="5" r=".8" fill="#7e7e80"/><circle cx="2.31" cy="2.31" r=".8" fill="#7e7e80"/><circle cx="5" cy="1.2" r=".8" fill="#7e7e80"/><circle cx="7.69" cy="2.31" r=".8" fill="#7e7e80"/><circle cx="5" cy="5" r=".8" fill="#7e7e80"/></svg>
<svg style="left:671px;top:594px;" width="8" height="9.5" viewBox="0 0 8 9.5"><path d="M2.8 7.5V1.5l4.5-1.2v6" fill="none" stroke="#7e7e80" stroke-width=".9"/><ellipse cx="1.7" cy="7.8" rx="1.5" ry="1.2" fill="#7e7e80"/><ellipse cx="6.2" cy="6.6" rx="1.5" ry="1.2" fill="#7e7e80"/></svg>
<svg style="left:737px;top:594px;" width="10" height="10" viewBox="0 0 10 10"><path d="M9.5 .5c-3 0-5 1.5-6.5 4.5l2 2c3-1.5 4.5-3.5 4.5-6.5zM3 5l-2 .3 1.5-2 1.8-.3M5 7l-.3 2 2-1.5.3-1.8" fill="none" stroke="#7e7e80" stroke-width=".8"/><path d="M1 9l1.5-1.5" stroke="#7e7e80" stroke-width=".8"/></svg>
<svg style="left:1027.5px;top:594.5px;" width="9.5" height="8.5" viewBox="0 0 9.5 8.5"><path d="M4.75 .3L.2 4.3h1.3v4h2.3v-2.6h1.9v2.6h2.3v-4h1.3z" fill="#c0c0c2"/></svg>
<svg style="left:1056px;top:594px;" width="9.5" height="9.5" viewBox="0 0 9.5 9.5"><circle cx="4.75" cy="4.75" r="2.3" fill="none" stroke="#c0c0c2" stroke-width="1.6"/><path d="M4.75 0v9.5M0 4.75h9.5M1.4 1.4l6.7 6.7M8.1 1.4L1.4 8.1" stroke="#c0c0c2" stroke-width="1.2"/><circle cx="4.75" cy="4.75" r="1.3" fill="#1c1c1e"/></svg>
</div>
</body></html>
